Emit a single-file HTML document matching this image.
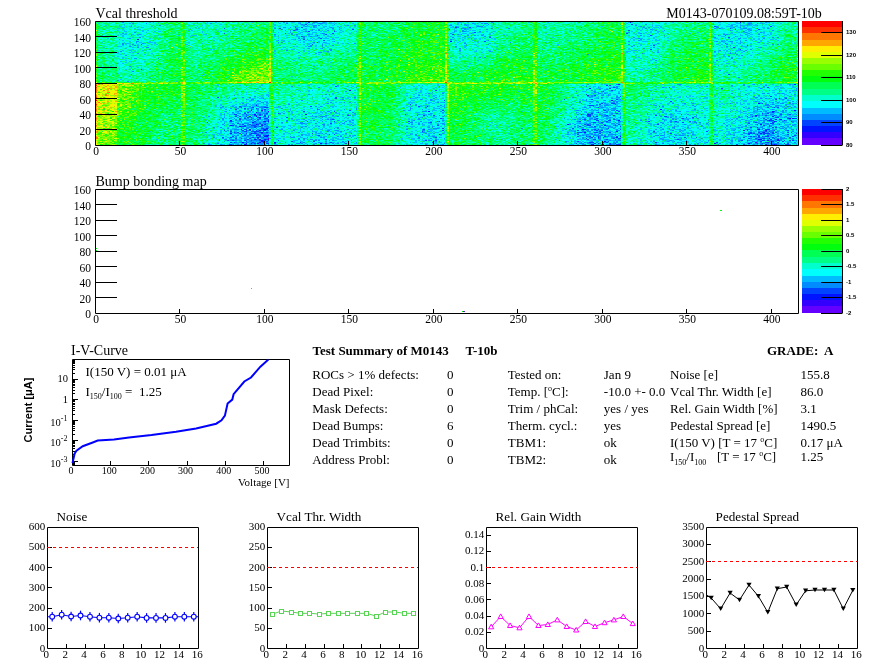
<!DOCTYPE html>
<html><head><meta charset="utf-8"><style>
html,body{margin:0;padding:0;background:#fff;}
#root{position:relative;width:896px;height:672px;overflow:hidden;background:#fff;}
#hm{position:absolute;left:95px;top:21px;width:704px;height:125px;image-rendering:pixelated;}
#ov{position:absolute;left:0;top:0;}
#fb{position:absolute;left:95px;top:21px;}
text{fill:#000;}
</style></head><body><div id="root">
<svg id="fb" width="704" height="125" shape-rendering="crispEdges"><rect x="0.0" y="117.8" width="14.0" height="6.7" fill="#7bfb02"/><rect x="13.5" y="117.8" width="14.0" height="6.7" fill="#50fe12"/><rect x="27.1" y="117.8" width="14.0" height="6.7" fill="#10ff2c"/><rect x="40.6" y="117.8" width="14.0" height="6.7" fill="#07ff51"/><rect x="54.2" y="117.8" width="14.0" height="6.7" fill="#02ff6c"/><rect x="67.7" y="117.8" width="14.0" height="6.7" fill="#02fe68"/><rect x="81.2" y="117.8" width="14.0" height="6.7" fill="#0bfe55"/><rect x="94.8" y="117.8" width="14.0" height="6.7" fill="#01fd81"/><rect x="108.3" y="117.8" width="14.0" height="6.7" fill="#00f6bd"/><rect x="121.8" y="117.8" width="14.0" height="6.7" fill="#00d9e8"/><rect x="135.4" y="117.8" width="14.0" height="6.7" fill="#00a6fa"/><rect x="148.9" y="117.8" width="14.0" height="6.7" fill="#008ffd"/><rect x="162.5" y="117.8" width="14.0" height="6.7" fill="#008cf8"/><rect x="176.0" y="117.8" width="14.0" height="6.7" fill="#01f2be"/><rect x="189.5" y="117.8" width="14.0" height="6.7" fill="#00e8db"/><rect x="203.1" y="117.8" width="14.0" height="6.7" fill="#00e1e4"/><rect x="216.6" y="117.8" width="14.0" height="6.7" fill="#00daea"/><rect x="230.2" y="117.8" width="14.0" height="6.7" fill="#00e1e8"/><rect x="243.7" y="117.8" width="14.0" height="6.7" fill="#00e8dc"/><rect x="257.2" y="117.8" width="14.0" height="6.7" fill="#11f77a"/><rect x="270.8" y="117.8" width="14.0" height="6.7" fill="#06ff4e"/><rect x="284.3" y="117.8" width="14.0" height="6.7" fill="#03fe62"/><rect x="297.8" y="117.8" width="14.0" height="6.7" fill="#00fb9c"/><rect x="311.4" y="117.8" width="14.0" height="6.7" fill="#00e6db"/><rect x="324.9" y="117.8" width="14.0" height="6.7" fill="#00d9e6"/><rect x="338.5" y="117.8" width="14.0" height="6.7" fill="#00dae1"/><rect x="352.0" y="117.8" width="14.0" height="6.7" fill="#11fe3f"/><rect x="365.5" y="117.8" width="14.0" height="6.7" fill="#04fe58"/><rect x="379.1" y="117.8" width="14.0" height="6.7" fill="#01fe6e"/><rect x="392.6" y="117.8" width="14.0" height="6.7" fill="#00fd87"/><rect x="406.2" y="117.8" width="14.0" height="6.7" fill="#00fd88"/><rect x="419.7" y="117.8" width="14.0" height="6.7" fill="#01fe75"/><rect x="433.2" y="117.8" width="14.0" height="6.7" fill="#0efe51"/><rect x="446.8" y="117.8" width="14.0" height="6.7" fill="#01fd82"/><rect x="460.3" y="117.8" width="14.0" height="6.7" fill="#00f2c8"/><rect x="473.8" y="117.8" width="14.0" height="6.7" fill="#00cff1"/><rect x="487.4" y="117.8" width="14.0" height="6.7" fill="#00b0fa"/><rect x="500.9" y="117.8" width="14.0" height="6.7" fill="#00affa"/><rect x="514.5" y="117.8" width="14.0" height="6.7" fill="#00bfed"/><rect x="528.0" y="117.8" width="14.0" height="6.7" fill="#03fc8e"/><rect x="541.5" y="117.8" width="14.0" height="6.7" fill="#00f3c6"/><rect x="555.1" y="117.8" width="14.0" height="6.7" fill="#00e0e6"/><rect x="568.6" y="117.8" width="14.0" height="6.7" fill="#00d4eb"/><rect x="582.2" y="117.8" width="14.0" height="6.7" fill="#00d5ec"/><rect x="595.7" y="117.8" width="14.0" height="6.7" fill="#00e5e0"/><rect x="609.2" y="117.8" width="14.0" height="6.7" fill="#01edbe"/><rect x="622.8" y="117.8" width="14.0" height="6.7" fill="#00e6de"/><rect x="636.3" y="117.8" width="14.0" height="6.7" fill="#00d7ee"/><rect x="649.8" y="117.8" width="14.0" height="6.7" fill="#00b4f7"/><rect x="663.4" y="117.8" width="14.0" height="6.7" fill="#009dfc"/><rect x="676.9" y="117.8" width="14.0" height="6.7" fill="#00acfa"/><rect x="690.5" y="117.8" width="14.0" height="6.7" fill="#00d0e8"/><rect x="0.0" y="111.6" width="14.0" height="6.7" fill="#7df901"/><rect x="13.5" y="111.6" width="14.0" height="6.7" fill="#51fe0f"/><rect x="27.1" y="111.6" width="14.0" height="6.7" fill="#13ff2b"/><rect x="40.6" y="111.6" width="14.0" height="6.7" fill="#07fe4c"/><rect x="54.2" y="111.6" width="14.0" height="6.7" fill="#03fe63"/><rect x="67.7" y="111.6" width="14.0" height="6.7" fill="#02fe66"/><rect x="81.2" y="111.6" width="14.0" height="6.7" fill="#11fe53"/><rect x="94.8" y="111.6" width="14.0" height="6.7" fill="#02fd7b"/><rect x="108.3" y="111.6" width="14.0" height="6.7" fill="#00f6bc"/><rect x="121.8" y="111.6" width="14.0" height="6.7" fill="#00dce9"/><rect x="135.4" y="111.6" width="14.0" height="6.7" fill="#00aef9"/><rect x="148.9" y="111.6" width="14.0" height="6.7" fill="#0092fd"/><rect x="162.5" y="111.6" width="14.0" height="6.7" fill="#008bf9"/><rect x="176.0" y="111.6" width="14.0" height="6.7" fill="#00f2c1"/><rect x="189.5" y="111.6" width="14.0" height="6.7" fill="#00eada"/><rect x="203.1" y="111.6" width="14.0" height="6.7" fill="#00e0e3"/><rect x="216.6" y="111.6" width="14.0" height="6.7" fill="#00dbe8"/><rect x="230.2" y="111.6" width="14.0" height="6.7" fill="#00e2e4"/><rect x="243.7" y="111.6" width="14.0" height="6.7" fill="#00e4e0"/><rect x="257.2" y="111.6" width="14.0" height="6.7" fill="#0ff678"/><rect x="270.8" y="111.6" width="14.0" height="6.7" fill="#05ff49"/><rect x="284.3" y="111.6" width="14.0" height="6.7" fill="#04fe5e"/><rect x="297.8" y="111.6" width="14.0" height="6.7" fill="#00fc9a"/><rect x="311.4" y="111.6" width="14.0" height="6.7" fill="#00e9dd"/><rect x="324.9" y="111.6" width="14.0" height="6.7" fill="#00dde7"/><rect x="338.5" y="111.6" width="14.0" height="6.7" fill="#00d8df"/><rect x="352.0" y="111.6" width="14.0" height="6.7" fill="#11ff3b"/><rect x="365.5" y="111.6" width="14.0" height="6.7" fill="#04fe53"/><rect x="379.1" y="111.6" width="14.0" height="6.7" fill="#02ff70"/><rect x="392.6" y="111.6" width="14.0" height="6.7" fill="#01fd88"/><rect x="406.2" y="111.6" width="14.0" height="6.7" fill="#00fd8c"/><rect x="419.7" y="111.6" width="14.0" height="6.7" fill="#02fe6f"/><rect x="433.2" y="111.6" width="14.0" height="6.7" fill="#13fe51"/><rect x="446.8" y="111.6" width="14.0" height="6.7" fill="#02fd7f"/><rect x="460.3" y="111.6" width="14.0" height="6.7" fill="#00f1c4"/><rect x="473.8" y="111.6" width="14.0" height="6.7" fill="#00cfeb"/><rect x="487.4" y="111.6" width="14.0" height="6.7" fill="#00b1f9"/><rect x="500.9" y="111.6" width="14.0" height="6.7" fill="#00adf9"/><rect x="514.5" y="111.6" width="14.0" height="6.7" fill="#00c0ee"/><rect x="528.0" y="111.6" width="14.0" height="6.7" fill="#03fc8f"/><rect x="541.5" y="111.6" width="14.0" height="6.7" fill="#00f6c1"/><rect x="555.1" y="111.6" width="14.0" height="6.7" fill="#00e2e7"/><rect x="568.6" y="111.6" width="14.0" height="6.7" fill="#00d3ea"/><rect x="582.2" y="111.6" width="14.0" height="6.7" fill="#00d6ea"/><rect x="595.7" y="111.6" width="14.0" height="6.7" fill="#00e5dd"/><rect x="609.2" y="111.6" width="14.0" height="6.7" fill="#00efba"/><rect x="622.8" y="111.6" width="14.0" height="6.7" fill="#00eadb"/><rect x="636.3" y="111.6" width="14.0" height="6.7" fill="#00d5ed"/><rect x="649.8" y="111.6" width="14.0" height="6.7" fill="#00bbf7"/><rect x="663.4" y="111.6" width="14.0" height="6.7" fill="#0098fd"/><rect x="676.9" y="111.6" width="14.0" height="6.7" fill="#00aef7"/><rect x="690.5" y="111.6" width="14.0" height="6.7" fill="#00cde8"/><rect x="0.0" y="105.4" width="14.0" height="6.7" fill="#8ff701"/><rect x="13.5" y="105.4" width="14.0" height="6.7" fill="#5dfe0c"/><rect x="27.1" y="105.4" width="14.0" height="6.7" fill="#1bff21"/><rect x="40.6" y="105.4" width="14.0" height="6.7" fill="#07fe45"/><rect x="54.2" y="105.4" width="14.0" height="6.7" fill="#02fe6a"/><rect x="67.7" y="105.4" width="14.0" height="6.7" fill="#03fe62"/><rect x="81.2" y="105.4" width="14.0" height="6.7" fill="#0dfe50"/><rect x="94.8" y="105.4" width="14.0" height="6.7" fill="#01fe7a"/><rect x="108.3" y="105.4" width="14.0" height="6.7" fill="#00f7b8"/><rect x="121.8" y="105.4" width="14.0" height="6.7" fill="#00dee5"/><rect x="135.4" y="105.4" width="14.0" height="6.7" fill="#00b2f8"/><rect x="148.9" y="105.4" width="14.0" height="6.7" fill="#0096fc"/><rect x="162.5" y="105.4" width="14.0" height="6.7" fill="#0193f8"/><rect x="176.0" y="105.4" width="14.0" height="6.7" fill="#00eebf"/><rect x="189.5" y="105.4" width="14.0" height="6.7" fill="#00eadc"/><rect x="203.1" y="105.4" width="14.0" height="6.7" fill="#00dfe2"/><rect x="216.6" y="105.4" width="14.0" height="6.7" fill="#00dde6"/><rect x="230.2" y="105.4" width="14.0" height="6.7" fill="#00dee8"/><rect x="243.7" y="105.4" width="14.0" height="6.7" fill="#00e9db"/><rect x="257.2" y="105.4" width="14.0" height="6.7" fill="#0ff679"/><rect x="270.8" y="105.4" width="14.0" height="6.7" fill="#07ff46"/><rect x="284.3" y="105.4" width="14.0" height="6.7" fill="#04fe5e"/><rect x="297.8" y="105.4" width="14.0" height="6.7" fill="#00fb91"/><rect x="311.4" y="105.4" width="14.0" height="6.7" fill="#00e8d7"/><rect x="324.9" y="105.4" width="14.0" height="6.7" fill="#00dfe9"/><rect x="338.5" y="105.4" width="14.0" height="6.7" fill="#00dddb"/><rect x="352.0" y="105.4" width="14.0" height="6.7" fill="#17fe37"/><rect x="365.5" y="105.4" width="14.0" height="6.7" fill="#05fe52"/><rect x="379.1" y="105.4" width="14.0" height="6.7" fill="#01fe76"/><rect x="392.6" y="105.4" width="14.0" height="6.7" fill="#00fd91"/><rect x="406.2" y="105.4" width="14.0" height="6.7" fill="#00fd8b"/><rect x="419.7" y="105.4" width="14.0" height="6.7" fill="#01fe76"/><rect x="433.2" y="105.4" width="14.0" height="6.7" fill="#0ffe57"/><rect x="446.8" y="105.4" width="14.0" height="6.7" fill="#01fd74"/><rect x="460.3" y="105.4" width="14.0" height="6.7" fill="#00f3c5"/><rect x="473.8" y="105.4" width="14.0" height="6.7" fill="#00d6ed"/><rect x="487.4" y="105.4" width="14.0" height="6.7" fill="#00b1f9"/><rect x="500.9" y="105.4" width="14.0" height="6.7" fill="#00adfb"/><rect x="514.5" y="105.4" width="14.0" height="6.7" fill="#00beee"/><rect x="528.0" y="105.4" width="14.0" height="6.7" fill="#03fd8a"/><rect x="541.5" y="105.4" width="14.0" height="6.7" fill="#00f6bf"/><rect x="555.1" y="105.4" width="14.0" height="6.7" fill="#00e3e4"/><rect x="568.6" y="105.4" width="14.0" height="6.7" fill="#00d6ed"/><rect x="582.2" y="105.4" width="14.0" height="6.7" fill="#00dbec"/><rect x="595.7" y="105.4" width="14.0" height="6.7" fill="#00e5e1"/><rect x="609.2" y="105.4" width="14.0" height="6.7" fill="#00f1b6"/><rect x="622.8" y="105.4" width="14.0" height="6.7" fill="#00ead8"/><rect x="636.3" y="105.4" width="14.0" height="6.7" fill="#00dbea"/><rect x="649.8" y="105.4" width="14.0" height="6.7" fill="#00bcf5"/><rect x="663.4" y="105.4" width="14.0" height="6.7" fill="#00a1fb"/><rect x="676.9" y="105.4" width="14.0" height="6.7" fill="#00b5f7"/><rect x="690.5" y="105.4" width="14.0" height="6.7" fill="#00d1e7"/><rect x="0.0" y="99.2" width="14.0" height="6.7" fill="#a3f300"/><rect x="13.5" y="99.2" width="14.0" height="6.7" fill="#67fd07"/><rect x="27.1" y="99.2" width="14.0" height="6.7" fill="#24fe16"/><rect x="40.6" y="99.2" width="14.0" height="6.7" fill="#0bff40"/><rect x="54.2" y="99.2" width="14.0" height="6.7" fill="#04ff5f"/><rect x="67.7" y="99.2" width="14.0" height="6.7" fill="#02fe68"/><rect x="81.2" y="99.2" width="14.0" height="6.7" fill="#0efe52"/><rect x="94.8" y="99.2" width="14.0" height="6.7" fill="#01fd7c"/><rect x="108.3" y="99.2" width="14.0" height="6.7" fill="#00f8b6"/><rect x="121.8" y="99.2" width="14.0" height="6.7" fill="#00e5e1"/><rect x="135.4" y="99.2" width="14.0" height="6.7" fill="#00b7f8"/><rect x="148.9" y="99.2" width="14.0" height="6.7" fill="#009bfb"/><rect x="162.5" y="99.2" width="14.0" height="6.7" fill="#009cf4"/><rect x="176.0" y="99.2" width="14.0" height="6.7" fill="#00f1c0"/><rect x="189.5" y="99.2" width="14.0" height="6.7" fill="#00eed8"/><rect x="203.1" y="99.2" width="14.0" height="6.7" fill="#00e3e0"/><rect x="216.6" y="99.2" width="14.0" height="6.7" fill="#00dce7"/><rect x="230.2" y="99.2" width="14.0" height="6.7" fill="#00e0e5"/><rect x="243.7" y="99.2" width="14.0" height="6.7" fill="#00e5dd"/><rect x="257.2" y="99.2" width="14.0" height="6.7" fill="#10f77a"/><rect x="270.8" y="99.2" width="14.0" height="6.7" fill="#07ff4a"/><rect x="284.3" y="99.2" width="14.0" height="6.7" fill="#04ff54"/><rect x="297.8" y="99.2" width="14.0" height="6.7" fill="#01fd92"/><rect x="311.4" y="99.2" width="14.0" height="6.7" fill="#00ebda"/><rect x="324.9" y="99.2" width="14.0" height="6.7" fill="#00e2e6"/><rect x="338.5" y="99.2" width="14.0" height="6.7" fill="#00ddde"/><rect x="352.0" y="99.2" width="14.0" height="6.7" fill="#19fe2e"/><rect x="365.5" y="99.2" width="14.0" height="6.7" fill="#05fe57"/><rect x="379.1" y="99.2" width="14.0" height="6.7" fill="#01fe7c"/><rect x="392.6" y="99.2" width="14.0" height="6.7" fill="#00fc9c"/><rect x="406.2" y="99.2" width="14.0" height="6.7" fill="#00fc94"/><rect x="419.7" y="99.2" width="14.0" height="6.7" fill="#01fe71"/><rect x="433.2" y="99.2" width="14.0" height="6.7" fill="#14fe4d"/><rect x="446.8" y="99.2" width="14.0" height="6.7" fill="#01fd6e"/><rect x="460.3" y="99.2" width="14.0" height="6.7" fill="#00f4bd"/><rect x="473.8" y="99.2" width="14.0" height="6.7" fill="#00dde9"/><rect x="487.4" y="99.2" width="14.0" height="6.7" fill="#00b9f7"/><rect x="500.9" y="99.2" width="14.0" height="6.7" fill="#00b7f8"/><rect x="514.5" y="99.2" width="14.0" height="6.7" fill="#00bfed"/><rect x="528.0" y="99.2" width="14.0" height="6.7" fill="#02fb90"/><rect x="541.5" y="99.2" width="14.0" height="6.7" fill="#00f8ba"/><rect x="555.1" y="99.2" width="14.0" height="6.7" fill="#00e5dc"/><rect x="568.6" y="99.2" width="14.0" height="6.7" fill="#00d8ec"/><rect x="582.2" y="99.2" width="14.0" height="6.7" fill="#00d5eb"/><rect x="595.7" y="99.2" width="14.0" height="6.7" fill="#00e3e0"/><rect x="609.2" y="99.2" width="14.0" height="6.7" fill="#01f0b6"/><rect x="622.8" y="99.2" width="14.0" height="6.7" fill="#00f0cf"/><rect x="636.3" y="99.2" width="14.0" height="6.7" fill="#00dde4"/><rect x="649.8" y="99.2" width="14.0" height="6.7" fill="#00c3f4"/><rect x="663.4" y="99.2" width="14.0" height="6.7" fill="#00acfa"/><rect x="676.9" y="99.2" width="14.0" height="6.7" fill="#00b9f7"/><rect x="690.5" y="99.2" width="14.0" height="6.7" fill="#00cfe6"/><rect x="0.0" y="93.0" width="14.0" height="6.7" fill="#b1f200"/><rect x="13.5" y="93.0" width="14.0" height="6.7" fill="#7bfc04"/><rect x="27.1" y="93.0" width="14.0" height="6.7" fill="#2ffe11"/><rect x="40.6" y="93.0" width="14.0" height="6.7" fill="#10ff32"/><rect x="54.2" y="93.0" width="14.0" height="6.7" fill="#05ff52"/><rect x="67.7" y="93.0" width="14.0" height="6.7" fill="#02fe5f"/><rect x="81.2" y="93.0" width="14.0" height="6.7" fill="#12fe4c"/><rect x="94.8" y="93.0" width="14.0" height="6.7" fill="#02fe71"/><rect x="108.3" y="93.0" width="14.0" height="6.7" fill="#00fbac"/><rect x="121.8" y="93.0" width="14.0" height="6.7" fill="#00ebd5"/><rect x="135.4" y="93.0" width="14.0" height="6.7" fill="#00c3f3"/><rect x="148.9" y="93.0" width="14.0" height="6.7" fill="#00affa"/><rect x="162.5" y="93.0" width="14.0" height="6.7" fill="#00a7f5"/><rect x="176.0" y="93.0" width="14.0" height="6.7" fill="#01f3ba"/><rect x="189.5" y="93.0" width="14.0" height="6.7" fill="#00eed4"/><rect x="203.1" y="93.0" width="14.0" height="6.7" fill="#00ebda"/><rect x="216.6" y="93.0" width="14.0" height="6.7" fill="#00e2e3"/><rect x="230.2" y="93.0" width="14.0" height="6.7" fill="#00e2e4"/><rect x="243.7" y="93.0" width="14.0" height="6.7" fill="#00e8d8"/><rect x="257.2" y="93.0" width="14.0" height="6.7" fill="#0ef776"/><rect x="270.8" y="93.0" width="14.0" height="6.7" fill="#09ff46"/><rect x="284.3" y="93.0" width="14.0" height="6.7" fill="#06fe52"/><rect x="297.8" y="93.0" width="14.0" height="6.7" fill="#01fd8d"/><rect x="311.4" y="93.0" width="14.0" height="6.7" fill="#00ebd8"/><rect x="324.9" y="93.0" width="14.0" height="6.7" fill="#00dce9"/><rect x="338.5" y="93.0" width="14.0" height="6.7" fill="#00e2d9"/><rect x="352.0" y="93.0" width="14.0" height="6.7" fill="#1dfe2b"/><rect x="365.5" y="93.0" width="14.0" height="6.7" fill="#05fe4c"/><rect x="379.1" y="93.0" width="14.0" height="6.7" fill="#01fe75"/><rect x="392.6" y="93.0" width="14.0" height="6.7" fill="#00fe86"/><rect x="406.2" y="93.0" width="14.0" height="6.7" fill="#01fd86"/><rect x="419.7" y="93.0" width="14.0" height="6.7" fill="#02fe6b"/><rect x="433.2" y="93.0" width="14.0" height="6.7" fill="#14fe45"/><rect x="446.8" y="93.0" width="14.0" height="6.7" fill="#03fe6a"/><rect x="460.3" y="93.0" width="14.0" height="6.7" fill="#00f8ad"/><rect x="473.8" y="93.0" width="14.0" height="6.7" fill="#00e2e2"/><rect x="487.4" y="93.0" width="14.0" height="6.7" fill="#00c8f4"/><rect x="500.9" y="93.0" width="14.0" height="6.7" fill="#00b7f7"/><rect x="514.5" y="93.0" width="14.0" height="6.7" fill="#00c0ed"/><rect x="528.0" y="93.0" width="14.0" height="6.7" fill="#03fc8d"/><rect x="541.5" y="93.0" width="14.0" height="6.7" fill="#00f8b5"/><rect x="555.1" y="93.0" width="14.0" height="6.7" fill="#00eed6"/><rect x="568.6" y="93.0" width="14.0" height="6.7" fill="#00e0e4"/><rect x="582.2" y="93.0" width="14.0" height="6.7" fill="#00dce8"/><rect x="595.7" y="93.0" width="14.0" height="6.7" fill="#00e6db"/><rect x="609.2" y="93.0" width="14.0" height="6.7" fill="#01f3af"/><rect x="622.8" y="93.0" width="14.0" height="6.7" fill="#00f1cb"/><rect x="636.3" y="93.0" width="14.0" height="6.7" fill="#00dee5"/><rect x="649.8" y="93.0" width="14.0" height="6.7" fill="#00cbf1"/><rect x="663.4" y="93.0" width="14.0" height="6.7" fill="#00b5f9"/><rect x="676.9" y="93.0" width="14.0" height="6.7" fill="#00bbf5"/><rect x="690.5" y="93.0" width="14.0" height="6.7" fill="#00d5e2"/><rect x="0.0" y="86.8" width="14.0" height="6.7" fill="#b7ef00"/><rect x="13.5" y="86.8" width="14.0" height="6.7" fill="#8bfb03"/><rect x="27.1" y="86.8" width="14.0" height="6.7" fill="#3cfe0b"/><rect x="40.6" y="86.8" width="14.0" height="6.7" fill="#12fe2c"/><rect x="54.2" y="86.8" width="14.0" height="6.7" fill="#05fe50"/><rect x="67.7" y="86.8" width="14.0" height="6.7" fill="#03fe5c"/><rect x="81.2" y="86.8" width="14.0" height="6.7" fill="#16fe47"/><rect x="94.8" y="86.8" width="14.0" height="6.7" fill="#02fe69"/><rect x="108.3" y="86.8" width="14.0" height="6.7" fill="#00fda1"/><rect x="121.8" y="86.8" width="14.0" height="6.7" fill="#00f2cc"/><rect x="135.4" y="86.8" width="14.0" height="6.7" fill="#00d2ec"/><rect x="148.9" y="86.8" width="14.0" height="6.7" fill="#00bcf6"/><rect x="162.5" y="86.8" width="14.0" height="6.7" fill="#00b3f0"/><rect x="176.0" y="86.8" width="14.0" height="6.7" fill="#01f7b3"/><rect x="189.5" y="86.8" width="14.0" height="6.7" fill="#00f1ce"/><rect x="203.1" y="86.8" width="14.0" height="6.7" fill="#00eed4"/><rect x="216.6" y="86.8" width="14.0" height="6.7" fill="#00e7e0"/><rect x="230.2" y="86.8" width="14.0" height="6.7" fill="#00eada"/><rect x="243.7" y="86.8" width="14.0" height="6.7" fill="#00ead8"/><rect x="257.2" y="86.8" width="14.0" height="6.7" fill="#10f871"/><rect x="270.8" y="86.8" width="14.0" height="6.7" fill="#09ff3c"/><rect x="284.3" y="86.8" width="14.0" height="6.7" fill="#06ff4d"/><rect x="297.8" y="86.8" width="14.0" height="6.7" fill="#01fc8b"/><rect x="311.4" y="86.8" width="14.0" height="6.7" fill="#00ebd9"/><rect x="324.9" y="86.8" width="14.0" height="6.7" fill="#00dee5"/><rect x="338.5" y="86.8" width="14.0" height="6.7" fill="#00e3d7"/><rect x="352.0" y="86.8" width="14.0" height="6.7" fill="#1efe24"/><rect x="365.5" y="86.8" width="14.0" height="6.7" fill="#09ff3e"/><rect x="379.1" y="86.8" width="14.0" height="6.7" fill="#03fe61"/><rect x="392.6" y="86.8" width="14.0" height="6.7" fill="#01fd77"/><rect x="406.2" y="86.8" width="14.0" height="6.7" fill="#01fe72"/><rect x="419.7" y="86.8" width="14.0" height="6.7" fill="#02fe5f"/><rect x="433.2" y="86.8" width="14.0" height="6.7" fill="#19ff3b"/><rect x="446.8" y="86.8" width="14.0" height="6.7" fill="#04ff60"/><rect x="460.3" y="86.8" width="14.0" height="6.7" fill="#00faa5"/><rect x="473.8" y="86.8" width="14.0" height="6.7" fill="#00e9d8"/><rect x="487.4" y="86.8" width="14.0" height="6.7" fill="#00cbf1"/><rect x="500.9" y="86.8" width="14.0" height="6.7" fill="#00bef7"/><rect x="514.5" y="86.8" width="14.0" height="6.7" fill="#00caeb"/><rect x="528.0" y="86.8" width="14.0" height="6.7" fill="#03fd7c"/><rect x="541.5" y="86.8" width="14.0" height="6.7" fill="#00faae"/><rect x="555.1" y="86.8" width="14.0" height="6.7" fill="#00f1cc"/><rect x="568.6" y="86.8" width="14.0" height="6.7" fill="#00e9db"/><rect x="582.2" y="86.8" width="14.0" height="6.7" fill="#00e6e1"/><rect x="595.7" y="86.8" width="14.0" height="6.7" fill="#00eed8"/><rect x="609.2" y="86.8" width="14.0" height="6.7" fill="#02f5a4"/><rect x="622.8" y="86.8" width="14.0" height="6.7" fill="#00f3c7"/><rect x="636.3" y="86.8" width="14.0" height="6.7" fill="#00e8df"/><rect x="649.8" y="86.8" width="14.0" height="6.7" fill="#00d7eb"/><rect x="663.4" y="86.8" width="14.0" height="6.7" fill="#00c0f5"/><rect x="676.9" y="86.8" width="14.0" height="6.7" fill="#00cbf0"/><rect x="690.5" y="86.8" width="14.0" height="6.7" fill="#00d6e2"/><rect x="0.0" y="80.6" width="14.0" height="6.7" fill="#c9e900"/><rect x="13.5" y="80.6" width="14.0" height="6.7" fill="#93f702"/><rect x="27.1" y="80.6" width="14.0" height="6.7" fill="#40fe0b"/><rect x="40.6" y="80.6" width="14.0" height="6.7" fill="#19ff22"/><rect x="54.2" y="80.6" width="14.0" height="6.7" fill="#07fe48"/><rect x="67.7" y="80.6" width="14.0" height="6.7" fill="#05fe54"/><rect x="81.2" y="80.6" width="14.0" height="6.7" fill="#13fe3f"/><rect x="94.8" y="80.6" width="14.0" height="6.7" fill="#03fe60"/><rect x="108.3" y="80.6" width="14.0" height="6.7" fill="#00fc91"/><rect x="121.8" y="80.6" width="14.0" height="6.7" fill="#00f4c0"/><rect x="135.4" y="80.6" width="14.0" height="6.7" fill="#00dfe3"/><rect x="148.9" y="80.6" width="14.0" height="6.7" fill="#00cbf1"/><rect x="162.5" y="80.6" width="14.0" height="6.7" fill="#00c7e9"/><rect x="176.0" y="80.6" width="14.0" height="6.7" fill="#01f7ab"/><rect x="189.5" y="80.6" width="14.0" height="6.7" fill="#00f4c5"/><rect x="203.1" y="80.6" width="14.0" height="6.7" fill="#00f1cf"/><rect x="216.6" y="80.6" width="14.0" height="6.7" fill="#00ecd8"/><rect x="230.2" y="80.6" width="14.0" height="6.7" fill="#00e9d8"/><rect x="243.7" y="80.6" width="14.0" height="6.7" fill="#00eed3"/><rect x="257.2" y="80.6" width="14.0" height="6.7" fill="#13f96b"/><rect x="270.8" y="80.6" width="14.0" height="6.7" fill="#0aff3a"/><rect x="284.3" y="80.6" width="14.0" height="6.7" fill="#06fe4c"/><rect x="297.8" y="80.6" width="14.0" height="6.7" fill="#01fc8c"/><rect x="311.4" y="80.6" width="14.0" height="6.7" fill="#00eddb"/><rect x="324.9" y="80.6" width="14.0" height="6.7" fill="#00e5e0"/><rect x="338.5" y="80.6" width="14.0" height="6.7" fill="#00e9d3"/><rect x="352.0" y="80.6" width="14.0" height="6.7" fill="#24fe23"/><rect x="365.5" y="80.6" width="14.0" height="6.7" fill="#0cfe38"/><rect x="379.1" y="80.6" width="14.0" height="6.7" fill="#05fe4e"/><rect x="392.6" y="80.6" width="14.0" height="6.7" fill="#04fe5e"/><rect x="406.2" y="80.6" width="14.0" height="6.7" fill="#02fe5e"/><rect x="419.7" y="80.6" width="14.0" height="6.7" fill="#04ff54"/><rect x="433.2" y="80.6" width="14.0" height="6.7" fill="#19fe3a"/><rect x="446.8" y="80.6" width="14.0" height="6.7" fill="#08fe4d"/><rect x="460.3" y="80.6" width="14.0" height="6.7" fill="#00fc97"/><rect x="473.8" y="80.6" width="14.0" height="6.7" fill="#00edce"/><rect x="487.4" y="80.6" width="14.0" height="6.7" fill="#00ceef"/><rect x="500.9" y="80.6" width="14.0" height="6.7" fill="#00cef1"/><rect x="514.5" y="80.6" width="14.0" height="6.7" fill="#00cee7"/><rect x="528.0" y="80.6" width="14.0" height="6.7" fill="#06fe78"/><rect x="541.5" y="80.6" width="14.0" height="6.7" fill="#00fba4"/><rect x="555.1" y="80.6" width="14.0" height="6.7" fill="#00f4bd"/><rect x="568.6" y="80.6" width="14.0" height="6.7" fill="#00efd1"/><rect x="582.2" y="80.6" width="14.0" height="6.7" fill="#00e8dc"/><rect x="595.7" y="80.6" width="14.0" height="6.7" fill="#00ecd2"/><rect x="609.2" y="80.6" width="14.0" height="6.7" fill="#02f8a2"/><rect x="622.8" y="80.6" width="14.0" height="6.7" fill="#00f6c0"/><rect x="636.3" y="80.6" width="14.0" height="6.7" fill="#00ead7"/><rect x="649.8" y="80.6" width="14.0" height="6.7" fill="#00dfe7"/><rect x="663.4" y="80.6" width="14.0" height="6.7" fill="#00d0f0"/><rect x="676.9" y="80.6" width="14.0" height="6.7" fill="#00d4ee"/><rect x="690.5" y="80.6" width="14.0" height="6.7" fill="#00e0df"/><rect x="0.0" y="74.4" width="14.0" height="6.7" fill="#d0e500"/><rect x="13.5" y="74.4" width="14.0" height="6.7" fill="#a1f600"/><rect x="27.1" y="74.4" width="14.0" height="6.7" fill="#51fe05"/><rect x="40.6" y="74.4" width="14.0" height="6.7" fill="#24fe19"/><rect x="54.2" y="74.4" width="14.0" height="6.7" fill="#0cfe35"/><rect x="67.7" y="74.4" width="14.0" height="6.7" fill="#08fe45"/><rect x="81.2" y="74.4" width="14.0" height="6.7" fill="#19fe3c"/><rect x="94.8" y="74.4" width="14.0" height="6.7" fill="#04fe58"/><rect x="108.3" y="74.4" width="14.0" height="6.7" fill="#01fe83"/><rect x="121.8" y="74.4" width="14.0" height="6.7" fill="#00fba7"/><rect x="135.4" y="74.4" width="14.0" height="6.7" fill="#00f0c8"/><rect x="148.9" y="74.4" width="14.0" height="6.7" fill="#00e7d8"/><rect x="162.5" y="74.4" width="14.0" height="6.7" fill="#00e8d3"/><rect x="176.0" y="74.4" width="14.0" height="6.7" fill="#02f9a0"/><rect x="189.5" y="74.4" width="14.0" height="6.7" fill="#00f7b6"/><rect x="203.1" y="74.4" width="14.0" height="6.7" fill="#00f3c3"/><rect x="216.6" y="74.4" width="14.0" height="6.7" fill="#00f4ca"/><rect x="230.2" y="74.4" width="14.0" height="6.7" fill="#00f0cd"/><rect x="243.7" y="74.4" width="14.0" height="6.7" fill="#00f4c9"/><rect x="257.2" y="74.4" width="14.0" height="6.7" fill="#15f868"/><rect x="270.8" y="74.4" width="14.0" height="6.7" fill="#0dff36"/><rect x="284.3" y="74.4" width="14.0" height="6.7" fill="#07fe4a"/><rect x="297.8" y="74.4" width="14.0" height="6.7" fill="#01fd81"/><rect x="311.4" y="74.4" width="14.0" height="6.7" fill="#00f0cf"/><rect x="324.9" y="74.4" width="14.0" height="6.7" fill="#00ecd9"/><rect x="338.5" y="74.4" width="14.0" height="6.7" fill="#00ebd0"/><rect x="352.0" y="74.4" width="14.0" height="6.7" fill="#2cfe18"/><rect x="365.5" y="74.4" width="14.0" height="6.7" fill="#14ff26"/><rect x="379.1" y="74.4" width="14.0" height="6.7" fill="#0dff33"/><rect x="392.6" y="74.4" width="14.0" height="6.7" fill="#09ff40"/><rect x="406.2" y="74.4" width="14.0" height="6.7" fill="#08fe3f"/><rect x="419.7" y="74.4" width="14.0" height="6.7" fill="#05ff4a"/><rect x="433.2" y="74.4" width="14.0" height="6.7" fill="#1ffe30"/><rect x="446.8" y="74.4" width="14.0" height="6.7" fill="#06ff49"/><rect x="460.3" y="74.4" width="14.0" height="6.7" fill="#01fd89"/><rect x="473.8" y="74.4" width="14.0" height="6.7" fill="#00f3c1"/><rect x="487.4" y="74.4" width="14.0" height="6.7" fill="#00dce5"/><rect x="500.9" y="74.4" width="14.0" height="6.7" fill="#00d2ee"/><rect x="514.5" y="74.4" width="14.0" height="6.7" fill="#00d5e3"/><rect x="528.0" y="74.4" width="14.0" height="6.7" fill="#06fe65"/><rect x="541.5" y="74.4" width="14.0" height="6.7" fill="#00fc8f"/><rect x="555.1" y="74.4" width="14.0" height="6.7" fill="#00f9b3"/><rect x="568.6" y="74.4" width="14.0" height="6.7" fill="#00f2c8"/><rect x="582.2" y="74.4" width="14.0" height="6.7" fill="#00ecd3"/><rect x="595.7" y="74.4" width="14.0" height="6.7" fill="#00f1c9"/><rect x="609.2" y="74.4" width="14.0" height="6.7" fill="#02fa9c"/><rect x="622.8" y="74.4" width="14.0" height="6.7" fill="#00f8ba"/><rect x="636.3" y="74.4" width="14.0" height="6.7" fill="#00eed1"/><rect x="649.8" y="74.4" width="14.0" height="6.7" fill="#00e9d9"/><rect x="663.4" y="74.4" width="14.0" height="6.7" fill="#00dde5"/><rect x="676.9" y="74.4" width="14.0" height="6.7" fill="#00dbe9"/><rect x="690.5" y="74.4" width="14.0" height="6.7" fill="#00e0dd"/><rect x="0.0" y="68.2" width="14.0" height="6.7" fill="#dbde00"/><rect x="13.5" y="68.2" width="14.0" height="6.7" fill="#abf301"/><rect x="27.1" y="68.2" width="14.0" height="6.7" fill="#60fe03"/><rect x="40.6" y="68.2" width="14.0" height="6.7" fill="#26ff14"/><rect x="54.2" y="68.2" width="14.0" height="6.7" fill="#0eff2f"/><rect x="67.7" y="68.2" width="14.0" height="6.7" fill="#0cff34"/><rect x="81.2" y="68.2" width="14.0" height="6.7" fill="#1ffe30"/><rect x="94.8" y="68.2" width="14.0" height="6.7" fill="#06fe4e"/><rect x="108.3" y="68.2" width="14.0" height="6.7" fill="#02fe71"/><rect x="121.8" y="68.2" width="14.0" height="6.7" fill="#00fc94"/><rect x="135.4" y="68.2" width="14.0" height="6.7" fill="#00faae"/><rect x="148.9" y="68.2" width="14.0" height="6.7" fill="#00f7bf"/><rect x="162.5" y="68.2" width="14.0" height="6.7" fill="#01f8b1"/><rect x="176.0" y="68.2" width="14.0" height="6.7" fill="#03fb96"/><rect x="189.5" y="68.2" width="14.0" height="6.7" fill="#00fba6"/><rect x="203.1" y="68.2" width="14.0" height="6.7" fill="#00f8b7"/><rect x="216.6" y="68.2" width="14.0" height="6.7" fill="#00f7ba"/><rect x="230.2" y="68.2" width="14.0" height="6.7" fill="#00f1c7"/><rect x="243.7" y="68.2" width="14.0" height="6.7" fill="#00f7c0"/><rect x="257.2" y="68.2" width="14.0" height="6.7" fill="#13fb6a"/><rect x="270.8" y="68.2" width="14.0" height="6.7" fill="#0dff32"/><rect x="284.3" y="68.2" width="14.0" height="6.7" fill="#07fe43"/><rect x="297.8" y="68.2" width="14.0" height="6.7" fill="#01fd79"/><rect x="311.4" y="68.2" width="14.0" height="6.7" fill="#00f3c3"/><rect x="324.9" y="68.2" width="14.0" height="6.7" fill="#00efd2"/><rect x="338.5" y="68.2" width="14.0" height="6.7" fill="#00edcb"/><rect x="352.0" y="68.2" width="14.0" height="6.7" fill="#37fe11"/><rect x="365.5" y="68.2" width="14.0" height="6.7" fill="#22ff17"/><rect x="379.1" y="68.2" width="14.0" height="6.7" fill="#1bfe1f"/><rect x="392.6" y="68.2" width="14.0" height="6.7" fill="#14ff27"/><rect x="406.2" y="68.2" width="14.0" height="6.7" fill="#0fff31"/><rect x="419.7" y="68.2" width="14.0" height="6.7" fill="#0dff2f"/><rect x="433.2" y="68.2" width="14.0" height="6.7" fill="#24fe2a"/><rect x="446.8" y="68.2" width="14.0" height="6.7" fill="#08fe44"/><rect x="460.3" y="68.2" width="14.0" height="6.7" fill="#01fe78"/><rect x="473.8" y="68.2" width="14.0" height="6.7" fill="#00f9b5"/><rect x="487.4" y="68.2" width="14.0" height="6.7" fill="#00e6df"/><rect x="500.9" y="68.2" width="14.0" height="6.7" fill="#00dae8"/><rect x="514.5" y="68.2" width="14.0" height="6.7" fill="#00d9df"/><rect x="528.0" y="68.2" width="14.0" height="6.7" fill="#09fe5a"/><rect x="541.5" y="68.2" width="14.0" height="6.7" fill="#01fe81"/><rect x="555.1" y="68.2" width="14.0" height="6.7" fill="#00fc9e"/><rect x="568.6" y="68.2" width="14.0" height="6.7" fill="#00f5c3"/><rect x="582.2" y="68.2" width="14.0" height="6.7" fill="#00eecd"/><rect x="595.7" y="68.2" width="14.0" height="6.7" fill="#00f4c7"/><rect x="609.2" y="68.2" width="14.0" height="6.7" fill="#03fa94"/><rect x="622.8" y="68.2" width="14.0" height="6.7" fill="#00f9ad"/><rect x="636.3" y="68.2" width="14.0" height="6.7" fill="#00f4c4"/><rect x="649.8" y="68.2" width="14.0" height="6.7" fill="#00efd3"/><rect x="663.4" y="68.2" width="14.0" height="6.7" fill="#00e4dd"/><rect x="676.9" y="68.2" width="14.0" height="6.7" fill="#00e4e3"/><rect x="690.5" y="68.2" width="14.0" height="6.7" fill="#00e3d6"/><rect x="0.0" y="62.0" width="14.0" height="6.7" fill="#e2cc00"/><rect x="13.5" y="62.0" width="14.0" height="6.7" fill="#bbe800"/><rect x="27.1" y="62.0" width="14.0" height="6.7" fill="#78fb02"/><rect x="40.6" y="62.0" width="14.0" height="6.7" fill="#3cfe0e"/><rect x="54.2" y="62.0" width="14.0" height="6.7" fill="#1ffe25"/><rect x="67.7" y="62.0" width="14.0" height="6.7" fill="#1cfe2b"/><rect x="81.2" y="62.0" width="14.0" height="6.7" fill="#2cfd2c"/><rect x="94.8" y="62.0" width="14.0" height="6.7" fill="#10fe44"/><rect x="108.3" y="62.0" width="14.0" height="6.7" fill="#09fe62"/><rect x="121.8" y="62.0" width="14.0" height="6.7" fill="#04fd7e"/><rect x="135.4" y="62.0" width="14.0" height="6.7" fill="#02fc93"/><rect x="148.9" y="62.0" width="14.0" height="6.7" fill="#03fa9d"/><rect x="162.5" y="62.0" width="14.0" height="6.7" fill="#03fa96"/><rect x="176.0" y="62.0" width="14.0" height="6.7" fill="#07fc83"/><rect x="189.5" y="62.0" width="14.0" height="6.7" fill="#03fb93"/><rect x="203.1" y="62.0" width="14.0" height="6.7" fill="#01f9a3"/><rect x="216.6" y="62.0" width="14.0" height="6.7" fill="#02f8a9"/><rect x="230.2" y="62.0" width="14.0" height="6.7" fill="#01f6b4"/><rect x="243.7" y="62.0" width="14.0" height="6.7" fill="#01f6b2"/><rect x="257.2" y="62.0" width="14.0" height="6.7" fill="#1bfc5c"/><rect x="270.8" y="62.0" width="14.0" height="6.7" fill="#19fe2e"/><rect x="284.3" y="62.0" width="14.0" height="6.7" fill="#13fe3b"/><rect x="297.8" y="62.0" width="14.0" height="6.7" fill="#07fe67"/><rect x="311.4" y="62.0" width="14.0" height="6.7" fill="#01f9ad"/><rect x="324.9" y="62.0" width="14.0" height="6.7" fill="#00f1c3"/><rect x="338.5" y="62.0" width="14.0" height="6.7" fill="#01f2bb"/><rect x="352.0" y="62.0" width="14.0" height="6.7" fill="#47fc0d"/><rect x="365.5" y="62.0" width="14.0" height="6.7" fill="#32fe12"/><rect x="379.1" y="62.0" width="14.0" height="6.7" fill="#30fe16"/><rect x="392.6" y="62.0" width="14.0" height="6.7" fill="#27fe1f"/><rect x="406.2" y="62.0" width="14.0" height="6.7" fill="#21fe23"/><rect x="419.7" y="62.0" width="14.0" height="6.7" fill="#19fe2e"/><rect x="433.2" y="62.0" width="14.0" height="6.7" fill="#31fd21"/><rect x="446.8" y="62.0" width="14.0" height="6.7" fill="#15fe39"/><rect x="460.3" y="62.0" width="14.0" height="6.7" fill="#06fd68"/><rect x="473.8" y="62.0" width="14.0" height="6.7" fill="#02f9a0"/><rect x="487.4" y="62.0" width="14.0" height="6.7" fill="#00ebcb"/><rect x="500.9" y="62.0" width="14.0" height="6.7" fill="#00deda"/><rect x="514.5" y="62.0" width="14.0" height="6.7" fill="#01dfd0"/><rect x="528.0" y="62.0" width="14.0" height="6.7" fill="#14fe4a"/><rect x="541.5" y="62.0" width="14.0" height="6.7" fill="#08fe6f"/><rect x="555.1" y="62.0" width="14.0" height="6.7" fill="#03fb8c"/><rect x="568.6" y="62.0" width="14.0" height="6.7" fill="#01f7af"/><rect x="582.2" y="62.0" width="14.0" height="6.7" fill="#01f3bd"/><rect x="595.7" y="62.0" width="14.0" height="6.7" fill="#01f7b2"/><rect x="609.2" y="62.0" width="14.0" height="6.7" fill="#08fa85"/><rect x="622.8" y="62.0" width="14.0" height="6.7" fill="#02fb9a"/><rect x="636.3" y="62.0" width="14.0" height="6.7" fill="#01f8b1"/><rect x="649.8" y="62.0" width="14.0" height="6.7" fill="#00f0be"/><rect x="663.4" y="62.0" width="14.0" height="6.7" fill="#00eec8"/><rect x="676.9" y="62.0" width="14.0" height="6.7" fill="#00eacc"/><rect x="690.5" y="62.0" width="14.0" height="6.7" fill="#01ebc7"/><rect x="0.0" y="55.8" width="14.0" height="6.7" fill="#10fe51"/><rect x="13.5" y="55.8" width="14.0" height="6.7" fill="#07fd70"/><rect x="27.1" y="55.8" width="14.0" height="6.7" fill="#03fb94"/><rect x="40.6" y="55.8" width="14.0" height="6.7" fill="#04fc7d"/><rect x="54.2" y="55.8" width="14.0" height="6.7" fill="#08fe5f"/><rect x="67.7" y="55.8" width="14.0" height="6.7" fill="#10fe45"/><rect x="81.2" y="55.8" width="14.0" height="6.7" fill="#20fe38"/><rect x="94.8" y="55.8" width="14.0" height="6.7" fill="#0afe5e"/><rect x="108.3" y="55.8" width="14.0" height="6.7" fill="#10ff45"/><rect x="121.8" y="55.8" width="14.0" height="6.7" fill="#22fe26"/><rect x="135.4" y="55.8" width="14.0" height="6.7" fill="#53fc08"/><rect x="148.9" y="55.8" width="14.0" height="6.7" fill="#7af902"/><rect x="162.5" y="55.8" width="14.0" height="6.7" fill="#9bf200"/><rect x="176.0" y="55.8" width="14.0" height="6.7" fill="#11fd4e"/><rect x="189.5" y="55.8" width="14.0" height="6.7" fill="#07fe68"/><rect x="203.1" y="55.8" width="14.0" height="6.7" fill="#06fe6e"/><rect x="216.6" y="55.8" width="14.0" height="6.7" fill="#08fe64"/><rect x="230.2" y="55.8" width="14.0" height="6.7" fill="#0cff54"/><rect x="243.7" y="55.8" width="14.0" height="6.7" fill="#12fe42"/><rect x="257.2" y="55.8" width="14.0" height="6.7" fill="#2cfd2a"/><rect x="270.8" y="55.8" width="14.0" height="6.7" fill="#16fe34"/><rect x="284.3" y="55.8" width="14.0" height="6.7" fill="#1bff2a"/><rect x="297.8" y="55.8" width="14.0" height="6.7" fill="#27fe1f"/><rect x="311.4" y="55.8" width="14.0" height="6.7" fill="#34fd13"/><rect x="324.9" y="55.8" width="14.0" height="6.7" fill="#42fe0c"/><rect x="338.5" y="55.8" width="14.0" height="6.7" fill="#58fb08"/><rect x="352.0" y="55.8" width="14.0" height="6.7" fill="#16fe48"/><rect x="365.5" y="55.8" width="14.0" height="6.7" fill="#0eff46"/><rect x="379.1" y="55.8" width="14.0" height="6.7" fill="#13fe3a"/><rect x="392.6" y="55.8" width="14.0" height="6.7" fill="#1cff29"/><rect x="406.2" y="55.8" width="14.0" height="6.7" fill="#23fe1d"/><rect x="419.7" y="55.8" width="14.0" height="6.7" fill="#2dfe19"/><rect x="433.2" y="55.8" width="14.0" height="6.7" fill="#3afd22"/><rect x="446.8" y="55.8" width="14.0" height="6.7" fill="#12fe34"/><rect x="460.3" y="55.8" width="14.0" height="6.7" fill="#16ff33"/><rect x="473.8" y="55.8" width="14.0" height="6.7" fill="#1bff28"/><rect x="487.4" y="55.8" width="14.0" height="6.7" fill="#23fe21"/><rect x="500.9" y="55.8" width="14.0" height="6.7" fill="#2efe17"/><rect x="514.5" y="55.8" width="14.0" height="6.7" fill="#4bfc0c"/><rect x="528.0" y="55.8" width="14.0" height="6.7" fill="#06fc85"/><rect x="541.5" y="55.8" width="14.0" height="6.7" fill="#04fd8b"/><rect x="555.1" y="55.8" width="14.0" height="6.7" fill="#06fe7d"/><rect x="568.6" y="55.8" width="14.0" height="6.7" fill="#0ffe47"/><rect x="582.2" y="55.8" width="14.0" height="6.7" fill="#1cfe2a"/><rect x="595.7" y="55.8" width="14.0" height="6.7" fill="#20fe23"/><rect x="609.2" y="55.8" width="14.0" height="6.7" fill="#25fd49"/><rect x="622.8" y="55.8" width="14.0" height="6.7" fill="#03fb95"/><rect x="636.3" y="55.8" width="14.0" height="6.7" fill="#04fc89"/><rect x="649.8" y="55.8" width="14.0" height="6.7" fill="#05fd71"/><rect x="663.4" y="55.8" width="14.0" height="6.7" fill="#0dfe55"/><rect x="676.9" y="55.8" width="14.0" height="6.7" fill="#18fe31"/><rect x="690.5" y="55.8" width="14.0" height="6.7" fill="#2ffe20"/><rect x="0.0" y="49.6" width="14.0" height="6.7" fill="#08fe62"/><rect x="13.5" y="49.6" width="14.0" height="6.7" fill="#01fd81"/><rect x="27.1" y="49.6" width="14.0" height="6.7" fill="#00f9a5"/><rect x="40.6" y="49.6" width="14.0" height="6.7" fill="#00fd90"/><rect x="54.2" y="49.6" width="14.0" height="6.7" fill="#02fd74"/><rect x="67.7" y="49.6" width="14.0" height="6.7" fill="#06ff4d"/><rect x="81.2" y="49.6" width="14.0" height="6.7" fill="#17fe45"/><rect x="94.8" y="49.6" width="14.0" height="6.7" fill="#02fe69"/><rect x="108.3" y="49.6" width="14.0" height="6.7" fill="#04fe50"/><rect x="121.8" y="49.6" width="14.0" height="6.7" fill="#18ff26"/><rect x="135.4" y="49.6" width="14.0" height="6.7" fill="#38fe0c"/><rect x="148.9" y="49.6" width="14.0" height="6.7" fill="#5bfe03"/><rect x="162.5" y="49.6" width="14.0" height="6.7" fill="#8afa01"/><rect x="176.0" y="49.6" width="14.0" height="6.7" fill="#07fe66"/><rect x="189.5" y="49.6" width="14.0" height="6.7" fill="#01fd75"/><rect x="203.1" y="49.6" width="14.0" height="6.7" fill="#01fe7e"/><rect x="216.6" y="49.6" width="14.0" height="6.7" fill="#02fe74"/><rect x="230.2" y="49.6" width="14.0" height="6.7" fill="#03fe5f"/><rect x="243.7" y="49.6" width="14.0" height="6.7" fill="#06fe4b"/><rect x="257.2" y="49.6" width="14.0" height="6.7" fill="#1cfe35"/><rect x="270.8" y="49.6" width="14.0" height="6.7" fill="#0afe3e"/><rect x="284.3" y="49.6" width="14.0" height="6.7" fill="#0eff32"/><rect x="297.8" y="49.6" width="14.0" height="6.7" fill="#16ff26"/><rect x="311.4" y="49.6" width="14.0" height="6.7" fill="#20fe18"/><rect x="324.9" y="49.6" width="14.0" height="6.7" fill="#32ff10"/><rect x="338.5" y="49.6" width="14.0" height="6.7" fill="#4efd09"/><rect x="352.0" y="49.6" width="14.0" height="6.7" fill="#0cfe51"/><rect x="365.5" y="49.6" width="14.0" height="6.7" fill="#03fe59"/><rect x="379.1" y="49.6" width="14.0" height="6.7" fill="#06ff4c"/><rect x="392.6" y="49.6" width="14.0" height="6.7" fill="#0dff32"/><rect x="406.2" y="49.6" width="14.0" height="6.7" fill="#12ff24"/><rect x="419.7" y="49.6" width="14.0" height="6.7" fill="#1bfe21"/><rect x="433.2" y="49.6" width="14.0" height="6.7" fill="#2afe22"/><rect x="446.8" y="49.6" width="14.0" height="6.7" fill="#08ff45"/><rect x="460.3" y="49.6" width="14.0" height="6.7" fill="#0aff3f"/><rect x="473.8" y="49.6" width="14.0" height="6.7" fill="#0dfe30"/><rect x="487.4" y="49.6" width="14.0" height="6.7" fill="#13ff2b"/><rect x="500.9" y="49.6" width="14.0" height="6.7" fill="#1efe1d"/><rect x="514.5" y="49.6" width="14.0" height="6.7" fill="#36fe12"/><rect x="528.0" y="49.6" width="14.0" height="6.7" fill="#02fa98"/><rect x="541.5" y="49.6" width="14.0" height="6.7" fill="#00fb9f"/><rect x="555.1" y="49.6" width="14.0" height="6.7" fill="#00fd91"/><rect x="568.6" y="49.6" width="14.0" height="6.7" fill="#07fe58"/><rect x="582.2" y="49.6" width="14.0" height="6.7" fill="#0fff34"/><rect x="595.7" y="49.6" width="14.0" height="6.7" fill="#13ff27"/><rect x="609.2" y="49.6" width="14.0" height="6.7" fill="#1bfd55"/><rect x="622.8" y="49.6" width="14.0" height="6.7" fill="#00fbab"/><rect x="636.3" y="49.6" width="14.0" height="6.7" fill="#00f99e"/><rect x="649.8" y="49.6" width="14.0" height="6.7" fill="#01fd85"/><rect x="663.4" y="49.6" width="14.0" height="6.7" fill="#03fe5e"/><rect x="676.9" y="49.6" width="14.0" height="6.7" fill="#0cfe3c"/><rect x="690.5" y="49.6" width="14.0" height="6.7" fill="#23fe24"/><rect x="0.0" y="43.4" width="14.0" height="6.7" fill="#05fd75"/><rect x="13.5" y="43.4" width="14.0" height="6.7" fill="#00fc94"/><rect x="27.1" y="43.4" width="14.0" height="6.7" fill="#00f9b6"/><rect x="40.6" y="43.4" width="14.0" height="6.7" fill="#00fd9f"/><rect x="54.2" y="43.4" width="14.0" height="6.7" fill="#01fd7f"/><rect x="67.7" y="43.4" width="14.0" height="6.7" fill="#05ff4d"/><rect x="81.2" y="43.4" width="14.0" height="6.7" fill="#13fe4c"/><rect x="94.8" y="43.4" width="14.0" height="6.7" fill="#02fe6d"/><rect x="108.3" y="43.4" width="14.0" height="6.7" fill="#03fe61"/><rect x="121.8" y="43.4" width="14.0" height="6.7" fill="#0cfe3b"/><rect x="135.4" y="43.4" width="14.0" height="6.7" fill="#21ff19"/><rect x="148.9" y="43.4" width="14.0" height="6.7" fill="#3dfe0c"/><rect x="162.5" y="43.4" width="14.0" height="6.7" fill="#62fc05"/><rect x="176.0" y="43.4" width="14.0" height="6.7" fill="#06fd71"/><rect x="189.5" y="43.4" width="14.0" height="6.7" fill="#00fd87"/><rect x="203.1" y="43.4" width="14.0" height="6.7" fill="#00fd8e"/><rect x="216.6" y="43.4" width="14.0" height="6.7" fill="#00fd8a"/><rect x="230.2" y="43.4" width="14.0" height="6.7" fill="#01fe75"/><rect x="243.7" y="43.4" width="14.0" height="6.7" fill="#03fe5c"/><rect x="257.2" y="43.4" width="14.0" height="6.7" fill="#1afe38"/><rect x="270.8" y="43.4" width="14.0" height="6.7" fill="#07fe43"/><rect x="284.3" y="43.4" width="14.0" height="6.7" fill="#0aff39"/><rect x="297.8" y="43.4" width="14.0" height="6.7" fill="#11ff2b"/><rect x="311.4" y="43.4" width="14.0" height="6.7" fill="#1eff1a"/><rect x="324.9" y="43.4" width="14.0" height="6.7" fill="#29ff13"/><rect x="338.5" y="43.4" width="14.0" height="6.7" fill="#3efc0e"/><rect x="352.0" y="43.4" width="14.0" height="6.7" fill="#05fe73"/><rect x="365.5" y="43.4" width="14.0" height="6.7" fill="#01fe7b"/><rect x="379.1" y="43.4" width="14.0" height="6.7" fill="#02fe6b"/><rect x="392.6" y="43.4" width="14.0" height="6.7" fill="#08ff44"/><rect x="406.2" y="43.4" width="14.0" height="6.7" fill="#0dff35"/><rect x="419.7" y="43.4" width="14.0" height="6.7" fill="#12ff29"/><rect x="433.2" y="43.4" width="14.0" height="6.7" fill="#24fe30"/><rect x="446.8" y="43.4" width="14.0" height="6.7" fill="#04fe51"/><rect x="460.3" y="43.4" width="14.0" height="6.7" fill="#06ff4d"/><rect x="473.8" y="43.4" width="14.0" height="6.7" fill="#0bff37"/><rect x="487.4" y="43.4" width="14.0" height="6.7" fill="#0fff2e"/><rect x="500.9" y="43.4" width="14.0" height="6.7" fill="#18ff1d"/><rect x="514.5" y="43.4" width="14.0" height="6.7" fill="#30fe18"/><rect x="528.0" y="43.4" width="14.0" height="6.7" fill="#02fb9a"/><rect x="541.5" y="43.4" width="14.0" height="6.7" fill="#00faa6"/><rect x="555.1" y="43.4" width="14.0" height="6.7" fill="#00fc9a"/><rect x="568.6" y="43.4" width="14.0" height="6.7" fill="#03fe5f"/><rect x="582.2" y="43.4" width="14.0" height="6.7" fill="#0bff35"/><rect x="595.7" y="43.4" width="14.0" height="6.7" fill="#0dff30"/><rect x="609.2" y="43.4" width="14.0" height="6.7" fill="#16fb5b"/><rect x="622.8" y="43.4" width="14.0" height="6.7" fill="#00f7b7"/><rect x="636.3" y="43.4" width="14.0" height="6.7" fill="#00f9ad"/><rect x="649.8" y="43.4" width="14.0" height="6.7" fill="#00fc9a"/><rect x="663.4" y="43.4" width="14.0" height="6.7" fill="#03fe6c"/><rect x="676.9" y="43.4" width="14.0" height="6.7" fill="#06fe47"/><rect x="690.5" y="43.4" width="14.0" height="6.7" fill="#18ff31"/><rect x="0.0" y="37.2" width="14.0" height="6.7" fill="#04fd7d"/><rect x="13.5" y="37.2" width="14.0" height="6.7" fill="#00faa4"/><rect x="27.1" y="37.2" width="14.0" height="6.7" fill="#00f5c3"/><rect x="40.6" y="37.2" width="14.0" height="6.7" fill="#00f9ad"/><rect x="54.2" y="37.2" width="14.0" height="6.7" fill="#00fd87"/><rect x="67.7" y="37.2" width="14.0" height="6.7" fill="#05fe4f"/><rect x="81.2" y="37.2" width="14.0" height="6.7" fill="#13fe4e"/><rect x="94.8" y="37.2" width="14.0" height="6.7" fill="#01fe79"/><rect x="108.3" y="37.2" width="14.0" height="6.7" fill="#02fe69"/><rect x="121.8" y="37.2" width="14.0" height="6.7" fill="#05ff4b"/><rect x="135.4" y="37.2" width="14.0" height="6.7" fill="#11ff2b"/><rect x="148.9" y="37.2" width="14.0" height="6.7" fill="#22ff18"/><rect x="162.5" y="37.2" width="14.0" height="6.7" fill="#41fe0c"/><rect x="176.0" y="37.2" width="14.0" height="6.7" fill="#05fd81"/><rect x="189.5" y="37.2" width="14.0" height="6.7" fill="#00fc94"/><rect x="203.1" y="37.2" width="14.0" height="6.7" fill="#00fba3"/><rect x="216.6" y="37.2" width="14.0" height="6.7" fill="#00fd95"/><rect x="230.2" y="37.2" width="14.0" height="6.7" fill="#01fd85"/><rect x="243.7" y="37.2" width="14.0" height="6.7" fill="#01fe6f"/><rect x="257.2" y="37.2" width="14.0" height="6.7" fill="#15fe47"/><rect x="270.8" y="37.2" width="14.0" height="6.7" fill="#06ff47"/><rect x="284.3" y="37.2" width="14.0" height="6.7" fill="#09ff41"/><rect x="297.8" y="37.2" width="14.0" height="6.7" fill="#0efe30"/><rect x="311.4" y="37.2" width="14.0" height="6.7" fill="#1aff1f"/><rect x="324.9" y="37.2" width="14.0" height="6.7" fill="#1fff1d"/><rect x="338.5" y="37.2" width="14.0" height="6.7" fill="#38fe11"/><rect x="352.0" y="37.2" width="14.0" height="6.7" fill="#02fc8f"/><rect x="365.5" y="37.2" width="14.0" height="6.7" fill="#00fba1"/><rect x="379.1" y="37.2" width="14.0" height="6.7" fill="#00fc98"/><rect x="392.6" y="37.2" width="14.0" height="6.7" fill="#03fe5f"/><rect x="406.2" y="37.2" width="14.0" height="6.7" fill="#09ff38"/><rect x="419.7" y="37.2" width="14.0" height="6.7" fill="#0bff37"/><rect x="433.2" y="37.2" width="14.0" height="6.7" fill="#1afe3e"/><rect x="446.8" y="37.2" width="14.0" height="6.7" fill="#03fe62"/><rect x="460.3" y="37.2" width="14.0" height="6.7" fill="#03fe5a"/><rect x="473.8" y="37.2" width="14.0" height="6.7" fill="#08fe4c"/><rect x="487.4" y="37.2" width="14.0" height="6.7" fill="#0dff33"/><rect x="500.9" y="37.2" width="14.0" height="6.7" fill="#13ff2b"/><rect x="514.5" y="37.2" width="14.0" height="6.7" fill="#21fe24"/><rect x="528.0" y="37.2" width="14.0" height="6.7" fill="#02f8a8"/><rect x="541.5" y="37.2" width="14.0" height="6.7" fill="#00f8b6"/><rect x="555.1" y="37.2" width="14.0" height="6.7" fill="#00faad"/><rect x="568.6" y="37.2" width="14.0" height="6.7" fill="#03fe68"/><rect x="582.2" y="37.2" width="14.0" height="6.7" fill="#09ff3b"/><rect x="595.7" y="37.2" width="14.0" height="6.7" fill="#0cff36"/><rect x="609.2" y="37.2" width="14.0" height="6.7" fill="#14fb68"/><rect x="622.8" y="37.2" width="14.0" height="6.7" fill="#00f5c4"/><rect x="636.3" y="37.2" width="14.0" height="6.7" fill="#00f4c3"/><rect x="649.8" y="37.2" width="14.0" height="6.7" fill="#00f8a8"/><rect x="663.4" y="37.2" width="14.0" height="6.7" fill="#01fe7e"/><rect x="676.9" y="37.2" width="14.0" height="6.7" fill="#05fe54"/><rect x="690.5" y="37.2" width="14.0" height="6.7" fill="#10fe3c"/><rect x="0.0" y="31.0" width="14.0" height="6.7" fill="#04fc88"/><rect x="13.5" y="31.0" width="14.0" height="6.7" fill="#00f8ab"/><rect x="27.1" y="31.0" width="14.0" height="6.7" fill="#00f3c8"/><rect x="40.6" y="31.0" width="14.0" height="6.7" fill="#00f7b9"/><rect x="54.2" y="31.0" width="14.0" height="6.7" fill="#01fc94"/><rect x="67.7" y="31.0" width="14.0" height="6.7" fill="#03fe59"/><rect x="81.2" y="31.0" width="14.0" height="6.7" fill="#10fe5a"/><rect x="94.8" y="31.0" width="14.0" height="6.7" fill="#00fd8f"/><rect x="108.3" y="31.0" width="14.0" height="6.7" fill="#00fe7c"/><rect x="121.8" y="31.0" width="14.0" height="6.7" fill="#03fd65"/><rect x="135.4" y="31.0" width="14.0" height="6.7" fill="#06fe47"/><rect x="148.9" y="31.0" width="14.0" height="6.7" fill="#12ff27"/><rect x="162.5" y="31.0" width="14.0" height="6.7" fill="#2dfe19"/><rect x="176.0" y="31.0" width="14.0" height="6.7" fill="#02fb97"/><rect x="189.5" y="31.0" width="14.0" height="6.7" fill="#00fab2"/><rect x="203.1" y="31.0" width="14.0" height="6.7" fill="#00f7be"/><rect x="216.6" y="31.0" width="14.0" height="6.7" fill="#00f9b3"/><rect x="230.2" y="31.0" width="14.0" height="6.7" fill="#00fca0"/><rect x="243.7" y="31.0" width="14.0" height="6.7" fill="#00fd86"/><rect x="257.2" y="31.0" width="14.0" height="6.7" fill="#11fd53"/><rect x="270.8" y="31.0" width="14.0" height="6.7" fill="#06fe4f"/><rect x="284.3" y="31.0" width="14.0" height="6.7" fill="#07fe44"/><rect x="297.8" y="31.0" width="14.0" height="6.7" fill="#0cff36"/><rect x="311.4" y="31.0" width="14.0" height="6.7" fill="#15ff23"/><rect x="324.9" y="31.0" width="14.0" height="6.7" fill="#1aff1d"/><rect x="338.5" y="31.0" width="14.0" height="6.7" fill="#2efe17"/><rect x="352.0" y="31.0" width="14.0" height="6.7" fill="#02faa6"/><rect x="365.5" y="31.0" width="14.0" height="6.7" fill="#00f6bf"/><rect x="379.1" y="31.0" width="14.0" height="6.7" fill="#00faaf"/><rect x="392.6" y="31.0" width="14.0" height="6.7" fill="#01fe7f"/><rect x="406.2" y="31.0" width="14.0" height="6.7" fill="#06fe50"/><rect x="419.7" y="31.0" width="14.0" height="6.7" fill="#08ff4a"/><rect x="433.2" y="31.0" width="14.0" height="6.7" fill="#14fe4a"/><rect x="446.8" y="31.0" width="14.0" height="6.7" fill="#01fe70"/><rect x="460.3" y="31.0" width="14.0" height="6.7" fill="#01fe69"/><rect x="473.8" y="31.0" width="14.0" height="6.7" fill="#04fe5a"/><rect x="487.4" y="31.0" width="14.0" height="6.7" fill="#09fe3f"/><rect x="500.9" y="31.0" width="14.0" height="6.7" fill="#0dfe30"/><rect x="514.5" y="31.0" width="14.0" height="6.7" fill="#1efe24"/><rect x="528.0" y="31.0" width="14.0" height="6.7" fill="#01f7b2"/><rect x="541.5" y="31.0" width="14.0" height="6.7" fill="#00f6bd"/><rect x="555.1" y="31.0" width="14.0" height="6.7" fill="#00f9b6"/><rect x="568.6" y="31.0" width="14.0" height="6.7" fill="#01fe76"/><rect x="582.2" y="31.0" width="14.0" height="6.7" fill="#06ff4d"/><rect x="595.7" y="31.0" width="14.0" height="6.7" fill="#07ff43"/><rect x="609.2" y="31.0" width="14.0" height="6.7" fill="#11f86f"/><rect x="622.8" y="31.0" width="14.0" height="6.7" fill="#00f0d1"/><rect x="636.3" y="31.0" width="14.0" height="6.7" fill="#00efd3"/><rect x="649.8" y="31.0" width="14.0" height="6.7" fill="#00f2c1"/><rect x="663.4" y="31.0" width="14.0" height="6.7" fill="#00fc96"/><rect x="676.9" y="31.0" width="14.0" height="6.7" fill="#01fe70"/><rect x="690.5" y="31.0" width="14.0" height="6.7" fill="#10ff47"/><rect x="0.0" y="24.8" width="14.0" height="6.7" fill="#03fb91"/><rect x="13.5" y="24.8" width="14.0" height="6.7" fill="#00f6b5"/><rect x="27.1" y="24.8" width="14.0" height="6.7" fill="#00eed4"/><rect x="40.6" y="24.8" width="14.0" height="6.7" fill="#00f3c8"/><rect x="54.2" y="24.8" width="14.0" height="6.7" fill="#00f8a7"/><rect x="67.7" y="24.8" width="14.0" height="6.7" fill="#03fe62"/><rect x="81.2" y="24.8" width="14.0" height="6.7" fill="#0efe60"/><rect x="94.8" y="24.8" width="14.0" height="6.7" fill="#00fd94"/><rect x="108.3" y="24.8" width="14.0" height="6.7" fill="#00fd88"/><rect x="121.8" y="24.8" width="14.0" height="6.7" fill="#02fe70"/><rect x="135.4" y="24.8" width="14.0" height="6.7" fill="#02fe5b"/><rect x="148.9" y="24.8" width="14.0" height="6.7" fill="#08fe47"/><rect x="162.5" y="24.8" width="14.0" height="6.7" fill="#1afe2b"/><rect x="176.0" y="24.8" width="14.0" height="6.7" fill="#01faa7"/><rect x="189.5" y="24.8" width="14.0" height="6.7" fill="#00f4c1"/><rect x="203.1" y="24.8" width="14.0" height="6.7" fill="#00ecd5"/><rect x="216.6" y="24.8" width="14.0" height="6.7" fill="#00ebd3"/><rect x="230.2" y="24.8" width="14.0" height="6.7" fill="#00f5c5"/><rect x="243.7" y="24.8" width="14.0" height="6.7" fill="#00f9ac"/><rect x="257.2" y="24.8" width="14.0" height="6.7" fill="#0cfe5f"/><rect x="270.8" y="24.8" width="14.0" height="6.7" fill="#03ff59"/><rect x="284.3" y="24.8" width="14.0" height="6.7" fill="#05ff49"/><rect x="297.8" y="24.8" width="14.0" height="6.7" fill="#0cff3a"/><rect x="311.4" y="24.8" width="14.0" height="6.7" fill="#11fe2c"/><rect x="324.9" y="24.8" width="14.0" height="6.7" fill="#18ff1f"/><rect x="338.5" y="24.8" width="14.0" height="6.7" fill="#27fe1b"/><rect x="352.0" y="24.8" width="14.0" height="6.7" fill="#01f4bb"/><rect x="365.5" y="24.8" width="14.0" height="6.7" fill="#00f1cd"/><rect x="379.1" y="24.8" width="14.0" height="6.7" fill="#00f2c8"/><rect x="392.6" y="24.8" width="14.0" height="6.7" fill="#00fb98"/><rect x="406.2" y="24.8" width="14.0" height="6.7" fill="#01fe70"/><rect x="419.7" y="24.8" width="14.0" height="6.7" fill="#04fe5a"/><rect x="433.2" y="24.8" width="14.0" height="6.7" fill="#10fe56"/><rect x="446.8" y="24.8" width="14.0" height="6.7" fill="#01fd7f"/><rect x="460.3" y="24.8" width="14.0" height="6.7" fill="#01fe7a"/><rect x="473.8" y="24.8" width="14.0" height="6.7" fill="#02fe69"/><rect x="487.4" y="24.8" width="14.0" height="6.7" fill="#07fe48"/><rect x="500.9" y="24.8" width="14.0" height="6.7" fill="#0aff3d"/><rect x="514.5" y="24.8" width="14.0" height="6.7" fill="#1dfe29"/><rect x="528.0" y="24.8" width="14.0" height="6.7" fill="#00f3bb"/><rect x="541.5" y="24.8" width="14.0" height="6.7" fill="#00f1cd"/><rect x="555.1" y="24.8" width="14.0" height="6.7" fill="#00f3c9"/><rect x="568.6" y="24.8" width="14.0" height="6.7" fill="#01fd88"/><rect x="582.2" y="24.8" width="14.0" height="6.7" fill="#04fe5b"/><rect x="595.7" y="24.8" width="14.0" height="6.7" fill="#06ff4e"/><rect x="609.2" y="24.8" width="14.0" height="6.7" fill="#0df57b"/><rect x="622.8" y="24.8" width="14.0" height="6.7" fill="#00e8db"/><rect x="636.3" y="24.8" width="14.0" height="6.7" fill="#00e9dd"/><rect x="649.8" y="24.8" width="14.0" height="6.7" fill="#00f2d0"/><rect x="663.4" y="24.8" width="14.0" height="6.7" fill="#00f8b3"/><rect x="676.9" y="24.8" width="14.0" height="6.7" fill="#01fc84"/><rect x="690.5" y="24.8" width="14.0" height="6.7" fill="#0cfe58"/><rect x="0.0" y="18.6" width="14.0" height="6.7" fill="#03fc92"/><rect x="13.5" y="18.6" width="14.0" height="6.7" fill="#00f3bb"/><rect x="27.1" y="18.6" width="14.0" height="6.7" fill="#00ebd5"/><rect x="40.6" y="18.6" width="14.0" height="6.7" fill="#00f1cd"/><rect x="54.2" y="18.6" width="14.0" height="6.7" fill="#00faac"/><rect x="67.7" y="18.6" width="14.0" height="6.7" fill="#03fe68"/><rect x="81.2" y="18.6" width="14.0" height="6.7" fill="#0efd65"/><rect x="94.8" y="18.6" width="14.0" height="6.7" fill="#00fba7"/><rect x="108.3" y="18.6" width="14.0" height="6.7" fill="#00fd9b"/><rect x="121.8" y="18.6" width="14.0" height="6.7" fill="#00fd84"/><rect x="135.4" y="18.6" width="14.0" height="6.7" fill="#01fe6f"/><rect x="148.9" y="18.6" width="14.0" height="6.7" fill="#04ff53"/><rect x="162.5" y="18.6" width="14.0" height="6.7" fill="#10fe3c"/><rect x="176.0" y="18.6" width="14.0" height="6.7" fill="#00f5b9"/><rect x="189.5" y="18.6" width="14.0" height="6.7" fill="#00f0d3"/><rect x="203.1" y="18.6" width="14.0" height="6.7" fill="#00e4e5"/><rect x="216.6" y="18.6" width="14.0" height="6.7" fill="#00dee5"/><rect x="230.2" y="18.6" width="14.0" height="6.7" fill="#00efd6"/><rect x="243.7" y="18.6" width="14.0" height="6.7" fill="#00f5c1"/><rect x="257.2" y="18.6" width="14.0" height="6.7" fill="#0afc73"/><rect x="270.8" y="18.6" width="14.0" height="6.7" fill="#03fe62"/><rect x="284.3" y="18.6" width="14.0" height="6.7" fill="#04fe58"/><rect x="297.8" y="18.6" width="14.0" height="6.7" fill="#09fe41"/><rect x="311.4" y="18.6" width="14.0" height="6.7" fill="#0dff35"/><rect x="324.9" y="18.6" width="14.0" height="6.7" fill="#14ff28"/><rect x="338.5" y="18.6" width="14.0" height="6.7" fill="#2afe1e"/><rect x="352.0" y="18.6" width="14.0" height="6.7" fill="#01ebca"/><rect x="365.5" y="18.6" width="14.0" height="6.7" fill="#00ebd5"/><rect x="379.1" y="18.6" width="14.0" height="6.7" fill="#00eed3"/><rect x="392.6" y="18.6" width="14.0" height="6.7" fill="#00fbad"/><rect x="406.2" y="18.6" width="14.0" height="6.7" fill="#00fe85"/><rect x="419.7" y="18.6" width="14.0" height="6.7" fill="#01fe74"/><rect x="433.2" y="18.6" width="14.0" height="6.7" fill="#0cfd67"/><rect x="446.8" y="18.6" width="14.0" height="6.7" fill="#00fd95"/><rect x="460.3" y="18.6" width="14.0" height="6.7" fill="#00fd89"/><rect x="473.8" y="18.6" width="14.0" height="6.7" fill="#01fe74"/><rect x="487.4" y="18.6" width="14.0" height="6.7" fill="#03fe5e"/><rect x="500.9" y="18.6" width="14.0" height="6.7" fill="#07fe3e"/><rect x="514.5" y="18.6" width="14.0" height="6.7" fill="#19ff2d"/><rect x="528.0" y="18.6" width="14.0" height="6.7" fill="#00efc8"/><rect x="541.5" y="18.6" width="14.0" height="6.7" fill="#00eed4"/><rect x="555.1" y="18.6" width="14.0" height="6.7" fill="#00f0cf"/><rect x="568.6" y="18.6" width="14.0" height="6.7" fill="#00fb99"/><rect x="582.2" y="18.6" width="14.0" height="6.7" fill="#03fe69"/><rect x="595.7" y="18.6" width="14.0" height="6.7" fill="#03fe5e"/><rect x="609.2" y="18.6" width="14.0" height="6.7" fill="#0af383"/><rect x="622.8" y="18.6" width="14.0" height="6.7" fill="#00e1e1"/><rect x="636.3" y="18.6" width="14.0" height="6.7" fill="#00e3e3"/><rect x="649.8" y="18.6" width="14.0" height="6.7" fill="#00e9dc"/><rect x="663.4" y="18.6" width="14.0" height="6.7" fill="#00f3c5"/><rect x="676.9" y="18.6" width="14.0" height="6.7" fill="#00fb9a"/><rect x="690.5" y="18.6" width="14.0" height="6.7" fill="#07fe63"/><rect x="0.0" y="12.4" width="14.0" height="6.7" fill="#04fd86"/><rect x="13.5" y="12.4" width="14.0" height="6.7" fill="#00f6ad"/><rect x="27.1" y="12.4" width="14.0" height="6.7" fill="#00efcd"/><rect x="40.6" y="12.4" width="14.0" height="6.7" fill="#00f3d0"/><rect x="54.2" y="12.4" width="14.0" height="6.7" fill="#00f8ad"/><rect x="67.7" y="12.4" width="14.0" height="6.7" fill="#03fe70"/><rect x="81.2" y="12.4" width="14.0" height="6.7" fill="#0afc6c"/><rect x="94.8" y="12.4" width="14.0" height="6.7" fill="#00faac"/><rect x="108.3" y="12.4" width="14.0" height="6.7" fill="#00fcaa"/><rect x="121.8" y="12.4" width="14.0" height="6.7" fill="#00fc9c"/><rect x="135.4" y="12.4" width="14.0" height="6.7" fill="#01fd7e"/><rect x="148.9" y="12.4" width="14.0" height="6.7" fill="#02fe67"/><rect x="162.5" y="12.4" width="14.0" height="6.7" fill="#0ffe51"/><rect x="176.0" y="12.4" width="14.0" height="6.7" fill="#01f1bf"/><rect x="189.5" y="12.4" width="14.0" height="6.7" fill="#00ead6"/><rect x="203.1" y="12.4" width="14.0" height="6.7" fill="#00dce7"/><rect x="216.6" y="12.4" width="14.0" height="6.7" fill="#00e1e6"/><rect x="230.2" y="12.4" width="14.0" height="6.7" fill="#00e7df"/><rect x="243.7" y="12.4" width="14.0" height="6.7" fill="#00f2ca"/><rect x="257.2" y="12.4" width="14.0" height="6.7" fill="#0bfb77"/><rect x="270.8" y="12.4" width="14.0" height="6.7" fill="#02fe6c"/><rect x="284.3" y="12.4" width="14.0" height="6.7" fill="#03fe61"/><rect x="297.8" y="12.4" width="14.0" height="6.7" fill="#06fe4c"/><rect x="311.4" y="12.4" width="14.0" height="6.7" fill="#0aff37"/><rect x="324.9" y="12.4" width="14.0" height="6.7" fill="#12ff2f"/><rect x="338.5" y="12.4" width="14.0" height="6.7" fill="#23fe26"/><rect x="352.0" y="12.4" width="14.0" height="6.7" fill="#00eccc"/><rect x="365.5" y="12.4" width="14.0" height="6.7" fill="#00e5db"/><rect x="379.1" y="12.4" width="14.0" height="6.7" fill="#00edd8"/><rect x="392.6" y="12.4" width="14.0" height="6.7" fill="#00f9b5"/><rect x="406.2" y="12.4" width="14.0" height="6.7" fill="#00fc92"/><rect x="419.7" y="12.4" width="14.0" height="6.7" fill="#01fe78"/><rect x="433.2" y="12.4" width="14.0" height="6.7" fill="#0afd73"/><rect x="446.8" y="12.4" width="14.0" height="6.7" fill="#00fc9a"/><rect x="460.3" y="12.4" width="14.0" height="6.7" fill="#00fb9a"/><rect x="473.8" y="12.4" width="14.0" height="6.7" fill="#00fe7f"/><rect x="487.4" y="12.4" width="14.0" height="6.7" fill="#01ff6e"/><rect x="500.9" y="12.4" width="14.0" height="6.7" fill="#06ff4e"/><rect x="514.5" y="12.4" width="14.0" height="6.7" fill="#17fe34"/><rect x="528.0" y="12.4" width="14.0" height="6.7" fill="#00ecc6"/><rect x="541.5" y="12.4" width="14.0" height="6.7" fill="#00e9da"/><rect x="555.1" y="12.4" width="14.0" height="6.7" fill="#00f0d0"/><rect x="568.6" y="12.4" width="14.0" height="6.7" fill="#00faab"/><rect x="582.2" y="12.4" width="14.0" height="6.7" fill="#01fe79"/><rect x="595.7" y="12.4" width="14.0" height="6.7" fill="#02fe6f"/><rect x="609.2" y="12.4" width="14.0" height="6.7" fill="#07f38d"/><rect x="622.8" y="12.4" width="14.0" height="6.7" fill="#00e1e3"/><rect x="636.3" y="12.4" width="14.0" height="6.7" fill="#00daea"/><rect x="649.8" y="12.4" width="14.0" height="6.7" fill="#00e3e0"/><rect x="663.4" y="12.4" width="14.0" height="6.7" fill="#00efd1"/><rect x="676.9" y="12.4" width="14.0" height="6.7" fill="#00faa5"/><rect x="690.5" y="12.4" width="14.0" height="6.7" fill="#07fe74"/><rect x="0.0" y="6.2" width="14.0" height="6.7" fill="#03fd87"/><rect x="13.5" y="6.2" width="14.0" height="6.7" fill="#00f9a6"/><rect x="27.1" y="6.2" width="14.0" height="6.7" fill="#00f1c8"/><rect x="40.6" y="6.2" width="14.0" height="6.7" fill="#00f4c5"/><rect x="54.2" y="6.2" width="14.0" height="6.7" fill="#00f9b4"/><rect x="67.7" y="6.2" width="14.0" height="6.7" fill="#01fe74"/><rect x="81.2" y="6.2" width="14.0" height="6.7" fill="#0afd71"/><rect x="94.8" y="6.2" width="14.0" height="6.7" fill="#00f7b6"/><rect x="108.3" y="6.2" width="14.0" height="6.7" fill="#00f9b1"/><rect x="121.8" y="6.2" width="14.0" height="6.7" fill="#00fba1"/><rect x="135.4" y="6.2" width="14.0" height="6.7" fill="#00fd8f"/><rect x="148.9" y="6.2" width="14.0" height="6.7" fill="#01fe77"/><rect x="162.5" y="6.2" width="14.0" height="6.7" fill="#0afe58"/><rect x="176.0" y="6.2" width="14.0" height="6.7" fill="#00eec7"/><rect x="189.5" y="6.2" width="14.0" height="6.7" fill="#00e5e1"/><rect x="203.1" y="6.2" width="14.0" height="6.7" fill="#00dbe9"/><rect x="216.6" y="6.2" width="14.0" height="6.7" fill="#00d5ed"/><rect x="230.2" y="6.2" width="14.0" height="6.7" fill="#00e1e4"/><rect x="243.7" y="6.2" width="14.0" height="6.7" fill="#00efcc"/><rect x="257.2" y="6.2" width="14.0" height="6.7" fill="#07f981"/><rect x="270.8" y="6.2" width="14.0" height="6.7" fill="#01fd70"/><rect x="284.3" y="6.2" width="14.0" height="6.7" fill="#02fe73"/><rect x="297.8" y="6.2" width="14.0" height="6.7" fill="#05fe53"/><rect x="311.4" y="6.2" width="14.0" height="6.7" fill="#09ff3d"/><rect x="324.9" y="6.2" width="14.0" height="6.7" fill="#0eff35"/><rect x="338.5" y="6.2" width="14.0" height="6.7" fill="#20fe29"/><rect x="352.0" y="6.2" width="14.0" height="6.7" fill="#00e7d2"/><rect x="365.5" y="6.2" width="14.0" height="6.7" fill="#00e1e4"/><rect x="379.1" y="6.2" width="14.0" height="6.7" fill="#00e7db"/><rect x="392.6" y="6.2" width="14.0" height="6.7" fill="#00f8bd"/><rect x="406.2" y="6.2" width="14.0" height="6.7" fill="#00fc95"/><rect x="419.7" y="6.2" width="14.0" height="6.7" fill="#01fe81"/><rect x="433.2" y="6.2" width="14.0" height="6.7" fill="#0afd70"/><rect x="446.8" y="6.2" width="14.0" height="6.7" fill="#00f9a8"/><rect x="460.3" y="6.2" width="14.0" height="6.7" fill="#00fb99"/><rect x="473.8" y="6.2" width="14.0" height="6.7" fill="#00fc92"/><rect x="487.4" y="6.2" width="14.0" height="6.7" fill="#01fd7e"/><rect x="500.9" y="6.2" width="14.0" height="6.7" fill="#04fe5d"/><rect x="514.5" y="6.2" width="14.0" height="6.7" fill="#11fe3c"/><rect x="528.0" y="6.2" width="14.0" height="6.7" fill="#00edc9"/><rect x="541.5" y="6.2" width="14.0" height="6.7" fill="#00e9d5"/><rect x="555.1" y="6.2" width="14.0" height="6.7" fill="#00eed5"/><rect x="568.6" y="6.2" width="14.0" height="6.7" fill="#00f9a8"/><rect x="582.2" y="6.2" width="14.0" height="6.7" fill="#01fd8a"/><rect x="595.7" y="6.2" width="14.0" height="6.7" fill="#01fd82"/><rect x="609.2" y="6.2" width="14.0" height="6.7" fill="#07f592"/><rect x="622.8" y="6.2" width="14.0" height="6.7" fill="#00dee6"/><rect x="636.3" y="6.2" width="14.0" height="6.7" fill="#00daeb"/><rect x="649.8" y="6.2" width="14.0" height="6.7" fill="#00dbeb"/><rect x="663.4" y="6.2" width="14.0" height="6.7" fill="#00e4df"/><rect x="676.9" y="6.2" width="14.0" height="6.7" fill="#00f6b8"/><rect x="690.5" y="6.2" width="14.0" height="6.7" fill="#04fc7e"/><rect x="0.0" y="0.0" width="14.0" height="6.7" fill="#05fd82"/><rect x="13.5" y="0.0" width="14.0" height="6.7" fill="#00f9a6"/><rect x="27.1" y="0.0" width="14.0" height="6.7" fill="#00f4c8"/><rect x="40.6" y="0.0" width="14.0" height="6.7" fill="#00f3c9"/><rect x="54.2" y="0.0" width="14.0" height="6.7" fill="#00f9b0"/><rect x="67.7" y="0.0" width="14.0" height="6.7" fill="#00fc7f"/><rect x="81.2" y="0.0" width="14.0" height="6.7" fill="#09fd75"/><rect x="94.8" y="0.0" width="14.0" height="6.7" fill="#00f9ba"/><rect x="108.3" y="0.0" width="14.0" height="6.7" fill="#00f7b4"/><rect x="121.8" y="0.0" width="14.0" height="6.7" fill="#00fbab"/><rect x="135.4" y="0.0" width="14.0" height="6.7" fill="#00fd97"/><rect x="148.9" y="0.0" width="14.0" height="6.7" fill="#00fe79"/><rect x="162.5" y="0.0" width="14.0" height="6.7" fill="#07fe62"/><rect x="176.0" y="0.0" width="14.0" height="6.7" fill="#00edc7"/><rect x="189.5" y="0.0" width="14.0" height="6.7" fill="#00e4df"/><rect x="203.1" y="0.0" width="14.0" height="6.7" fill="#00d9ea"/><rect x="216.6" y="0.0" width="14.0" height="6.7" fill="#00d2ed"/><rect x="230.2" y="0.0" width="14.0" height="6.7" fill="#00dfe6"/><rect x="243.7" y="0.0" width="14.0" height="6.7" fill="#00efd2"/><rect x="257.2" y="0.0" width="14.0" height="6.7" fill="#06f986"/><rect x="270.8" y="0.0" width="14.0" height="6.7" fill="#01fe74"/><rect x="284.3" y="0.0" width="14.0" height="6.7" fill="#01fe76"/><rect x="297.8" y="0.0" width="14.0" height="6.7" fill="#03fe61"/><rect x="311.4" y="0.0" width="14.0" height="6.7" fill="#08ff43"/><rect x="324.9" y="0.0" width="14.0" height="6.7" fill="#0efe35"/><rect x="338.5" y="0.0" width="14.0" height="6.7" fill="#1efe28"/><rect x="352.0" y="0.0" width="14.0" height="6.7" fill="#00e5d2"/><rect x="365.5" y="0.0" width="14.0" height="6.7" fill="#00e5e1"/><rect x="379.1" y="0.0" width="14.0" height="6.7" fill="#00e6dc"/><rect x="392.6" y="0.0" width="14.0" height="6.7" fill="#00f8bb"/><rect x="406.2" y="0.0" width="14.0" height="6.7" fill="#00fc9d"/><rect x="419.7" y="0.0" width="14.0" height="6.7" fill="#00fd84"/><rect x="433.2" y="0.0" width="14.0" height="6.7" fill="#07fd76"/><rect x="446.8" y="0.0" width="14.0" height="6.7" fill="#00fba9"/><rect x="460.3" y="0.0" width="14.0" height="6.7" fill="#00faa6"/><rect x="473.8" y="0.0" width="14.0" height="6.7" fill="#00fc9a"/><rect x="487.4" y="0.0" width="14.0" height="6.7" fill="#01fe7e"/><rect x="500.9" y="0.0" width="14.0" height="6.7" fill="#03ff5f"/><rect x="514.5" y="0.0" width="14.0" height="6.7" fill="#12ff43"/><rect x="528.0" y="0.0" width="14.0" height="6.7" fill="#00edca"/><rect x="541.5" y="0.0" width="14.0" height="6.7" fill="#00edd6"/><rect x="555.1" y="0.0" width="14.0" height="6.7" fill="#00ecd4"/><rect x="568.6" y="0.0" width="14.0" height="6.7" fill="#00fbae"/><rect x="582.2" y="0.0" width="14.0" height="6.7" fill="#00fd8b"/><rect x="595.7" y="0.0" width="14.0" height="6.7" fill="#00fd83"/><rect x="609.2" y="0.0" width="14.0" height="6.7" fill="#06f496"/><rect x="622.8" y="0.0" width="14.0" height="6.7" fill="#00dfe3"/><rect x="636.3" y="0.0" width="14.0" height="6.7" fill="#00dae7"/><rect x="649.8" y="0.0" width="14.0" height="6.7" fill="#00daea"/><rect x="663.4" y="0.0" width="14.0" height="6.7" fill="#00dfe4"/><rect x="676.9" y="0.0" width="14.0" height="6.7" fill="#00f6bb"/><rect x="690.5" y="0.0" width="14.0" height="6.7" fill="#03fe81"/></svg>
<canvas id="hm" width="416" height="161"></canvas>
<svg id="ov" width="896" height="672" viewBox="0 0 896 672"><path d="M95.5 21.5H798.5V145.5H95.5Z" fill="none" stroke="#000" stroke-width="1"/>
<line x1="96" y1="129.5" x2="117" y2="129.5" stroke="#000" stroke-width="1" />
<line x1="96" y1="114.5" x2="117" y2="114.5" stroke="#000" stroke-width="1" />
<line x1="96" y1="98.5" x2="117" y2="98.5" stroke="#000" stroke-width="1" />
<line x1="96" y1="83.5" x2="117" y2="83.5" stroke="#000" stroke-width="1" />
<line x1="96" y1="67.5" x2="117" y2="67.5" stroke="#000" stroke-width="1" />
<line x1="96" y1="52.5" x2="117" y2="52.5" stroke="#000" stroke-width="1" />
<line x1="96" y1="36.5" x2="117" y2="36.5" stroke="#000" stroke-width="1" />
<text x="91" y="150.3" font-family="Liberation Serif" font-size="11.5" font-weight="normal" text-anchor="end" >0</text>
<text x="91" y="134.8" font-family="Liberation Serif" font-size="11.5" font-weight="normal" text-anchor="end" >20</text>
<text x="91" y="119.3" font-family="Liberation Serif" font-size="11.5" font-weight="normal" text-anchor="end" >40</text>
<text x="91" y="103.8" font-family="Liberation Serif" font-size="11.5" font-weight="normal" text-anchor="end" >60</text>
<text x="91" y="88.3" font-family="Liberation Serif" font-size="11.5" font-weight="normal" text-anchor="end" >80</text>
<text x="91" y="72.8" font-family="Liberation Serif" font-size="11.5" font-weight="normal" text-anchor="end" >100</text>
<text x="91" y="57.3" font-family="Liberation Serif" font-size="11.5" font-weight="normal" text-anchor="end" >120</text>
<text x="91" y="41.8" font-family="Liberation Serif" font-size="11.5" font-weight="normal" text-anchor="end" >140</text>
<text x="91" y="26.3" font-family="Liberation Serif" font-size="11.5" font-weight="normal" text-anchor="end" >160</text>
<line x1="179.5" y1="141" x2="179.5" y2="145" stroke="#000" stroke-width="1" />
<line x1="264.5" y1="141" x2="264.5" y2="145" stroke="#000" stroke-width="1" />
<line x1="348.5" y1="141" x2="348.5" y2="145" stroke="#000" stroke-width="1" />
<line x1="433.5" y1="141" x2="433.5" y2="145" stroke="#000" stroke-width="1" />
<line x1="517.5" y1="141" x2="517.5" y2="145" stroke="#000" stroke-width="1" />
<line x1="602.5" y1="141" x2="602.5" y2="145" stroke="#000" stroke-width="1" />
<line x1="686.5" y1="141" x2="686.5" y2="145" stroke="#000" stroke-width="1" />
<line x1="771.5" y1="141" x2="771.5" y2="145" stroke="#000" stroke-width="1" />
<text x="96.0" y="154.7" font-family="Liberation Serif" font-size="11.5" font-weight="normal" text-anchor="middle" >0</text>
<text x="180.495" y="154.7" font-family="Liberation Serif" font-size="11.5" font-weight="normal" text-anchor="middle" >50</text>
<text x="264.99" y="154.7" font-family="Liberation Serif" font-size="11.5" font-weight="normal" text-anchor="middle" >100</text>
<text x="349.485" y="154.7" font-family="Liberation Serif" font-size="11.5" font-weight="normal" text-anchor="middle" >150</text>
<text x="433.98" y="154.7" font-family="Liberation Serif" font-size="11.5" font-weight="normal" text-anchor="middle" >200</text>
<text x="518.4749999999999" y="154.7" font-family="Liberation Serif" font-size="11.5" font-weight="normal" text-anchor="middle" >250</text>
<text x="602.97" y="154.7" font-family="Liberation Serif" font-size="11.5" font-weight="normal" text-anchor="middle" >300</text>
<text x="687.465" y="154.7" font-family="Liberation Serif" font-size="11.5" font-weight="normal" text-anchor="middle" >350</text>
<text x="771.96" y="154.7" font-family="Liberation Serif" font-size="11.5" font-weight="normal" text-anchor="middle" >400</text>
<text x="95.5" y="17.6" font-family="Liberation Serif" font-size="14" font-weight="normal" text-anchor="start" >Vcal threshold</text>
<rect x="802" y="138" width="40" height="7" fill="#6300FF"/>
<rect x="802" y="132" width="40" height="6" fill="#3300FF"/>
<rect x="802" y="126" width="40" height="6" fill="#0014FF"/>
<rect x="802" y="120" width="40" height="6" fill="#0044FF"/>
<rect x="802" y="114" width="40" height="6" fill="#008BFF"/>
<rect x="802" y="108" width="40" height="6" fill="#00BBFF"/>
<rect x="802" y="101" width="40" height="7" fill="#00FFFC"/>
<rect x="802" y="95" width="40" height="6" fill="#00FFCC"/>
<rect x="802" y="89" width="40" height="6" fill="#00FF85"/>
<rect x="802" y="82" width="40" height="7" fill="#00FF55"/>
<rect x="802" y="76" width="40" height="6" fill="#00FF0E"/>
<rect x="802" y="70" width="40" height="6" fill="#22FF00"/>
<rect x="802" y="64" width="40" height="6" fill="#69FF00"/>
<rect x="802" y="58" width="40" height="6" fill="#99FF00"/>
<rect x="802" y="52" width="40" height="6" fill="#E0FF00"/>
<rect x="802" y="46" width="40" height="6" fill="#FFEE00"/>
<rect x="802" y="40" width="40" height="6" fill="#FFA700"/>
<rect x="802" y="33" width="40" height="7" fill="#FF7700"/>
<rect x="802" y="27" width="40" height="6" fill="#FF3000"/>
<rect x="802" y="21" width="40" height="6" fill="#FF0000"/>
<line x1="842.5" y1="21" x2="842.5" y2="145.5" stroke="#000" stroke-width="1" />
<line x1="821" y1="145.5" x2="842" y2="145.5" stroke="#000" stroke-width="1" />
<text x="846" y="146.6" font-family="Liberation Sans" font-size="6" font-weight="bold" text-anchor="start" >80</text>
<line x1="821" y1="122.5" x2="842" y2="122.5" stroke="#000" stroke-width="1" />
<text x="846" y="124.1" font-family="Liberation Sans" font-size="6" font-weight="bold" text-anchor="start" >90</text>
<line x1="821" y1="100.5" x2="842" y2="100.5" stroke="#000" stroke-width="1" />
<text x="846" y="101.85" font-family="Liberation Sans" font-size="6" font-weight="bold" text-anchor="start" >100</text>
<line x1="821" y1="77.5" x2="842" y2="77.5" stroke="#000" stroke-width="1" />
<text x="846" y="79.35" font-family="Liberation Sans" font-size="6" font-weight="bold" text-anchor="start" >110</text>
<line x1="821" y1="55.5" x2="842" y2="55.5" stroke="#000" stroke-width="1" />
<text x="846" y="56.85" font-family="Liberation Sans" font-size="6" font-weight="bold" text-anchor="start" >120</text>
<line x1="821" y1="32.5" x2="842" y2="32.5" stroke="#000" stroke-width="1" />
<text x="846" y="34.35" font-family="Liberation Sans" font-size="6" font-weight="bold" text-anchor="start" >130</text>
<text x="821.8" y="17.6" font-family="Liberation Serif" font-size="14" font-weight="normal" text-anchor="end" >M0143-070109.08:59T-10b</text>
<path d="M95.5 189.5H798.5V313.5H95.5Z" fill="none" stroke="#000" stroke-width="1"/>
<line x1="96" y1="297.5" x2="117" y2="297.5" stroke="#000" stroke-width="1" />
<line x1="96" y1="282.5" x2="117" y2="282.5" stroke="#000" stroke-width="1" />
<line x1="96" y1="266.5" x2="117" y2="266.5" stroke="#000" stroke-width="1" />
<line x1="96" y1="251.5" x2="117" y2="251.5" stroke="#000" stroke-width="1" />
<line x1="96" y1="235.5" x2="117" y2="235.5" stroke="#000" stroke-width="1" />
<line x1="96" y1="220.5" x2="117" y2="220.5" stroke="#000" stroke-width="1" />
<line x1="96" y1="204.5" x2="117" y2="204.5" stroke="#000" stroke-width="1" />
<text x="91" y="318.3" font-family="Liberation Serif" font-size="11.5" font-weight="normal" text-anchor="end" >0</text>
<text x="91" y="302.8" font-family="Liberation Serif" font-size="11.5" font-weight="normal" text-anchor="end" >20</text>
<text x="91" y="287.3" font-family="Liberation Serif" font-size="11.5" font-weight="normal" text-anchor="end" >40</text>
<text x="91" y="271.8" font-family="Liberation Serif" font-size="11.5" font-weight="normal" text-anchor="end" >60</text>
<text x="91" y="256.3" font-family="Liberation Serif" font-size="11.5" font-weight="normal" text-anchor="end" >80</text>
<text x="91" y="240.8" font-family="Liberation Serif" font-size="11.5" font-weight="normal" text-anchor="end" >100</text>
<text x="91" y="225.3" font-family="Liberation Serif" font-size="11.5" font-weight="normal" text-anchor="end" >120</text>
<text x="91" y="209.8" font-family="Liberation Serif" font-size="11.5" font-weight="normal" text-anchor="end" >140</text>
<text x="91" y="194.3" font-family="Liberation Serif" font-size="11.5" font-weight="normal" text-anchor="end" >160</text>
<line x1="179.5" y1="309" x2="179.5" y2="313" stroke="#000" stroke-width="1" />
<line x1="264.5" y1="309" x2="264.5" y2="313" stroke="#000" stroke-width="1" />
<line x1="348.5" y1="309" x2="348.5" y2="313" stroke="#000" stroke-width="1" />
<line x1="433.5" y1="309" x2="433.5" y2="313" stroke="#000" stroke-width="1" />
<line x1="517.5" y1="309" x2="517.5" y2="313" stroke="#000" stroke-width="1" />
<line x1="602.5" y1="309" x2="602.5" y2="313" stroke="#000" stroke-width="1" />
<line x1="686.5" y1="309" x2="686.5" y2="313" stroke="#000" stroke-width="1" />
<line x1="771.5" y1="309" x2="771.5" y2="313" stroke="#000" stroke-width="1" />
<text x="96.0" y="322.7" font-family="Liberation Serif" font-size="11.5" font-weight="normal" text-anchor="middle" >0</text>
<text x="180.495" y="322.7" font-family="Liberation Serif" font-size="11.5" font-weight="normal" text-anchor="middle" >50</text>
<text x="264.99" y="322.7" font-family="Liberation Serif" font-size="11.5" font-weight="normal" text-anchor="middle" >100</text>
<text x="349.485" y="322.7" font-family="Liberation Serif" font-size="11.5" font-weight="normal" text-anchor="middle" >150</text>
<text x="433.98" y="322.7" font-family="Liberation Serif" font-size="11.5" font-weight="normal" text-anchor="middle" >200</text>
<text x="518.4749999999999" y="322.7" font-family="Liberation Serif" font-size="11.5" font-weight="normal" text-anchor="middle" >250</text>
<text x="602.97" y="322.7" font-family="Liberation Serif" font-size="11.5" font-weight="normal" text-anchor="middle" >300</text>
<text x="687.465" y="322.7" font-family="Liberation Serif" font-size="11.5" font-weight="normal" text-anchor="middle" >350</text>
<text x="771.96" y="322.7" font-family="Liberation Serif" font-size="11.5" font-weight="normal" text-anchor="middle" >400</text>
<text x="95.5" y="185.6" font-family="Liberation Serif" font-size="14" font-weight="normal" text-anchor="start" >Bump bonding map</text>
<rect x="802" y="306" width="40" height="7" fill="#6300FF"/>
<rect x="802" y="300" width="40" height="6" fill="#3300FF"/>
<rect x="802" y="294" width="40" height="6" fill="#0014FF"/>
<rect x="802" y="288" width="40" height="6" fill="#0044FF"/>
<rect x="802" y="282" width="40" height="6" fill="#008BFF"/>
<rect x="802" y="276" width="40" height="6" fill="#00BBFF"/>
<rect x="802" y="269" width="40" height="7" fill="#00FFFC"/>
<rect x="802" y="263" width="40" height="6" fill="#00FFCC"/>
<rect x="802" y="257" width="40" height="6" fill="#00FF85"/>
<rect x="802" y="250" width="40" height="7" fill="#00FF55"/>
<rect x="802" y="244" width="40" height="6" fill="#00FF0E"/>
<rect x="802" y="238" width="40" height="6" fill="#22FF00"/>
<rect x="802" y="232" width="40" height="6" fill="#69FF00"/>
<rect x="802" y="226" width="40" height="6" fill="#99FF00"/>
<rect x="802" y="220" width="40" height="6" fill="#E0FF00"/>
<rect x="802" y="214" width="40" height="6" fill="#FFEE00"/>
<rect x="802" y="208" width="40" height="6" fill="#FFA700"/>
<rect x="802" y="201" width="40" height="7" fill="#FF7700"/>
<rect x="802" y="195" width="40" height="6" fill="#FF3000"/>
<rect x="802" y="189" width="40" height="6" fill="#FF0000"/>
<line x1="842.5" y1="189" x2="842.5" y2="313.5" stroke="#000" stroke-width="1" />
<line x1="821" y1="189.5" x2="842" y2="189.5" stroke="#000" stroke-width="1" />
<text x="846" y="190.6" font-family="Liberation Sans" font-size="6" font-weight="bold" text-anchor="start" >2</text>
<line x1="821" y1="204.5" x2="842" y2="204.5" stroke="#000" stroke-width="1" />
<text x="846" y="206.1" font-family="Liberation Sans" font-size="6" font-weight="bold" text-anchor="start" >1.5</text>
<line x1="821" y1="220.5" x2="842" y2="220.5" stroke="#000" stroke-width="1" />
<text x="846" y="221.6" font-family="Liberation Sans" font-size="6" font-weight="bold" text-anchor="start" >1</text>
<line x1="821" y1="235.5" x2="842" y2="235.5" stroke="#000" stroke-width="1" />
<text x="846" y="237.1" font-family="Liberation Sans" font-size="6" font-weight="bold" text-anchor="start" >0.5</text>
<line x1="821" y1="251.5" x2="842" y2="251.5" stroke="#000" stroke-width="1" />
<text x="846" y="252.6" font-family="Liberation Sans" font-size="6" font-weight="bold" text-anchor="start" >0</text>
<line x1="821" y1="266.5" x2="842" y2="266.5" stroke="#000" stroke-width="1" />
<text x="846" y="268.1" font-family="Liberation Sans" font-size="6" font-weight="bold" text-anchor="start" >-0.5</text>
<line x1="821" y1="282.5" x2="842" y2="282.5" stroke="#000" stroke-width="1" />
<text x="846" y="283.6" font-family="Liberation Sans" font-size="6" font-weight="bold" text-anchor="start" >-1</text>
<line x1="821" y1="297.5" x2="842" y2="297.5" stroke="#000" stroke-width="1" />
<text x="846" y="299.1" font-family="Liberation Sans" font-size="6" font-weight="bold" text-anchor="start" >-1.5</text>
<line x1="821" y1="313.5" x2="842" y2="313.5" stroke="#000" stroke-width="1" />
<text x="846" y="314.6" font-family="Liberation Sans" font-size="6" font-weight="bold" text-anchor="start" >-2</text>
<rect x="251" y="288" width="1" height="1" fill="#00FF0E"/>
<rect x="96" y="248" width="1" height="1" fill="#00FF0E"/>
<rect x="96" y="250" width="1" height="1" fill="#00FF0E"/>
<rect x="462" y="311" width="1" height="1" fill="#00FF0E"/>
<rect x="463" y="311" width="2" height="1" fill="#6300FF"/>
<rect x="720" y="210" width="2" height="1" fill="#00FF0E"/>
<path d="M72.5 359.5H289.5V465.5H72.5Z" fill="none" stroke="#000" stroke-width="1"/>
<line x1="73" y1="464.5" x2="75" y2="464.5" stroke="#000" stroke-width="1" />
<line x1="73" y1="463.5" x2="75" y2="463.5" stroke="#000" stroke-width="1" />
<line x1="73" y1="462.5" x2="75" y2="462.5" stroke="#000" stroke-width="1" />
<line x1="73" y1="461.5" x2="78" y2="461.5" stroke="#000" stroke-width="1" />
<line x1="73" y1="454.5" x2="75" y2="454.5" stroke="#000" stroke-width="1" />
<line x1="73" y1="451.5" x2="75" y2="451.5" stroke="#000" stroke-width="1" />
<line x1="73" y1="448.5" x2="75" y2="448.5" stroke="#000" stroke-width="1" />
<line x1="73" y1="446.5" x2="75" y2="446.5" stroke="#000" stroke-width="1" />
<line x1="73" y1="445.5" x2="75" y2="445.5" stroke="#000" stroke-width="1" />
<line x1="73" y1="443.5" x2="75" y2="443.5" stroke="#000" stroke-width="1" />
<line x1="73" y1="442.5" x2="75" y2="442.5" stroke="#000" stroke-width="1" />
<line x1="73" y1="441.5" x2="75" y2="441.5" stroke="#000" stroke-width="1" />
<line x1="73" y1="440.5" x2="78" y2="440.5" stroke="#000" stroke-width="1" />
<line x1="73" y1="434.5" x2="75" y2="434.5" stroke="#000" stroke-width="1" />
<line x1="73" y1="430.5" x2="75" y2="430.5" stroke="#000" stroke-width="1" />
<line x1="73" y1="428.5" x2="75" y2="428.5" stroke="#000" stroke-width="1" />
<line x1="73" y1="426.5" x2="75" y2="426.5" stroke="#000" stroke-width="1" />
<line x1="73" y1="424.5" x2="75" y2="424.5" stroke="#000" stroke-width="1" />
<line x1="73" y1="423.5" x2="75" y2="423.5" stroke="#000" stroke-width="1" />
<line x1="73" y1="422.5" x2="75" y2="422.5" stroke="#000" stroke-width="1" />
<line x1="73" y1="421.5" x2="75" y2="421.5" stroke="#000" stroke-width="1" />
<line x1="73" y1="420.5" x2="78" y2="420.5" stroke="#000" stroke-width="1" />
<line x1="73" y1="414.5" x2="75" y2="414.5" stroke="#000" stroke-width="1" />
<line x1="73" y1="410.5" x2="75" y2="410.5" stroke="#000" stroke-width="1" />
<line x1="73" y1="408.5" x2="75" y2="408.5" stroke="#000" stroke-width="1" />
<line x1="73" y1="406.5" x2="75" y2="406.5" stroke="#000" stroke-width="1" />
<line x1="73" y1="404.5" x2="75" y2="404.5" stroke="#000" stroke-width="1" />
<line x1="73" y1="403.5" x2="75" y2="403.5" stroke="#000" stroke-width="1" />
<line x1="73" y1="401.5" x2="75" y2="401.5" stroke="#000" stroke-width="1" />
<line x1="73" y1="400.5" x2="75" y2="400.5" stroke="#000" stroke-width="1" />
<line x1="73" y1="399.5" x2="78" y2="399.5" stroke="#000" stroke-width="1" />
<line x1="73" y1="393.5" x2="75" y2="393.5" stroke="#000" stroke-width="1" />
<line x1="73" y1="390.5" x2="75" y2="390.5" stroke="#000" stroke-width="1" />
<line x1="73" y1="387.5" x2="75" y2="387.5" stroke="#000" stroke-width="1" />
<line x1="73" y1="385.5" x2="75" y2="385.5" stroke="#000" stroke-width="1" />
<line x1="73" y1="384.5" x2="75" y2="384.5" stroke="#000" stroke-width="1" />
<line x1="73" y1="382.5" x2="75" y2="382.5" stroke="#000" stroke-width="1" />
<line x1="73" y1="381.5" x2="75" y2="381.5" stroke="#000" stroke-width="1" />
<line x1="73" y1="380.5" x2="75" y2="380.5" stroke="#000" stroke-width="1" />
<line x1="73" y1="379.5" x2="78" y2="379.5" stroke="#000" stroke-width="1" />
<line x1="73" y1="373.5" x2="75" y2="373.5" stroke="#000" stroke-width="1" />
<line x1="73" y1="369.5" x2="75" y2="369.5" stroke="#000" stroke-width="1" />
<line x1="73" y1="367.5" x2="75" y2="367.5" stroke="#000" stroke-width="1" />
<line x1="73" y1="365.5" x2="75" y2="365.5" stroke="#000" stroke-width="1" />
<line x1="73" y1="363.5" x2="75" y2="363.5" stroke="#000" stroke-width="1" />
<line x1="73" y1="362.5" x2="75" y2="362.5" stroke="#000" stroke-width="1" />
<line x1="73" y1="361.5" x2="75" y2="361.5" stroke="#000" stroke-width="1" />
<line x1="73" y1="360.5" x2="75" y2="360.5" stroke="#000" stroke-width="1" />
<line x1="73" y1="359.5" x2="78" y2="359.5" stroke="#000" stroke-width="1" />
<text x="68" y="382" font-family="Liberation Serif" font-size="10.5" font-weight="normal" text-anchor="end" >10</text>
<text x="68" y="402.5" font-family="Liberation Serif" font-size="10.5" font-weight="normal" text-anchor="end" >1</text>
<text x="67.5" y="425.5" font-family="Liberation Serif" font-size="10.5" text-anchor="end">10<tspan font-size="8" dy="-4.6">-1</tspan></text>
<text x="67.5" y="446" font-family="Liberation Serif" font-size="10.5" text-anchor="end">10<tspan font-size="8" dy="-4.6">-2</tspan></text>
<text x="67.5" y="466.5" font-family="Liberation Serif" font-size="10.5" text-anchor="end">10<tspan font-size="8" dy="-4.6">-3</tspan></text>
<line x1="110.5" y1="461" x2="110.5" y2="465" stroke="#000" stroke-width="1" />
<line x1="148.5" y1="461" x2="148.5" y2="465" stroke="#000" stroke-width="1" />
<line x1="187.5" y1="461" x2="187.5" y2="465" stroke="#000" stroke-width="1" />
<line x1="225.5" y1="461" x2="225.5" y2="465" stroke="#000" stroke-width="1" />
<line x1="263.5" y1="461" x2="263.5" y2="465" stroke="#000" stroke-width="1" />
<text x="71.0" y="474" font-family="Liberation Serif" font-size="10" font-weight="normal" text-anchor="middle" >0</text>
<text x="109.2" y="474" font-family="Liberation Serif" font-size="10" font-weight="normal" text-anchor="middle" >100</text>
<text x="147.4" y="474" font-family="Liberation Serif" font-size="10" font-weight="normal" text-anchor="middle" >200</text>
<text x="185.60000000000002" y="474" font-family="Liberation Serif" font-size="10" font-weight="normal" text-anchor="middle" >300</text>
<text x="223.8" y="474" font-family="Liberation Serif" font-size="10" font-weight="normal" text-anchor="middle" >400</text>
<text x="262.0" y="474" font-family="Liberation Serif" font-size="10" font-weight="normal" text-anchor="middle" >500</text>
<text x="289.5" y="485.7" font-family="Liberation Serif" font-size="11" font-weight="normal" text-anchor="end" >Voltage [V]</text>
<text transform="translate(32.2,410) rotate(-90)" font-family="Liberation Sans" font-size="11" font-weight="bold" text-anchor="middle">Current [&#956;A]</text>
<text x="71" y="355" font-family="Liberation Serif" font-size="14" font-weight="normal" text-anchor="start" >I-V-Curve</text>
<text x="85.5" y="375.6" font-family="Liberation Serif" font-size="13" font-weight="normal" text-anchor="start" >I(150 V) = 0.01 &#956;A</text>
<text x="85.5" y="395.6" font-family="Liberation Serif" font-size="13" xml:space="preserve">I<tspan font-size="8" dy="3.4">150</tspan><tspan dy="-3.4">/I</tspan><tspan font-size="8" dy="3.4">100</tspan><tspan dy="-3.4"> =  1.25</tspan></text>
<polyline fill="none" stroke="#0000FF" stroke-width="2" points="72.5,463.1 74.6,453.75 76.5,450.6 82.75,446.25 92.75,442.5 97.75,440.6 114,439.4 129,437.5 151.5,435 176,431.7 196.1,428.4 216.2,423.7 221.5,420.3 224.9,415.6 227.6,403.6 232.3,399.6 233.6,394.2 244.3,381.5 251,377.5 260.4,366.7 268.4,359.6"/>
<text x="312.5" y="355" font-family="Liberation Serif" font-size="13" font-weight="bold" text-anchor="start" >Test Summary of M0143</text>
<text x="465.5" y="355" font-family="Liberation Serif" font-size="13" font-weight="bold" text-anchor="start" >T-10b</text>
<text x="767" y="355" font-family="Liberation Serif" font-size="13" font-weight="bold" text-anchor="start" xml:space="preserve">GRADE:  A</text>
<text x="312.3" y="379" font-family="Liberation Serif" font-size="13" font-weight="normal" text-anchor="start" >ROCs &gt; 1% defects:</text>
<text x="447" y="379" font-family="Liberation Serif" font-size="13" font-weight="normal" text-anchor="start" >0</text>
<text x="507.8" y="379" font-family="Liberation Serif" font-size="13" font-weight="normal" text-anchor="start" >Tested on:</text>
<text x="603.8" y="379" font-family="Liberation Serif" font-size="13" font-weight="normal" text-anchor="start" >Jan 9</text>
<text x="670" y="379" font-family="Liberation Serif" font-size="13" font-weight="normal" text-anchor="start" >Noise [e]</text>
<text x="800.6" y="379" font-family="Liberation Serif" font-size="13" font-weight="normal" text-anchor="start" >155.8</text>
<text x="312.3" y="396" font-family="Liberation Serif" font-size="13" font-weight="normal" text-anchor="start" >Dead Pixel:</text>
<text x="447" y="396" font-family="Liberation Serif" font-size="13" font-weight="normal" text-anchor="start" >0</text>
<text x="507.8" y="396" font-family="Liberation Serif" font-size="13" font-weight="normal" text-anchor="start" >Temp. [<tspan font-size="8" dy="-5">o</tspan><tspan dy="5">C]:</tspan></text>
<text x="603.8" y="396" font-family="Liberation Serif" font-size="13" font-weight="normal" text-anchor="start" >-10.0 +- 0.0</text>
<text x="670" y="396" font-family="Liberation Serif" font-size="13" font-weight="normal" text-anchor="start" >Vcal Thr. Width [e]</text>
<text x="800.6" y="396" font-family="Liberation Serif" font-size="13" font-weight="normal" text-anchor="start" >86.0</text>
<text x="312.3" y="412.9" font-family="Liberation Serif" font-size="13" font-weight="normal" text-anchor="start" >Mask Defects:</text>
<text x="447" y="412.9" font-family="Liberation Serif" font-size="13" font-weight="normal" text-anchor="start" >0</text>
<text x="507.8" y="412.9" font-family="Liberation Serif" font-size="13" font-weight="normal" text-anchor="start" >Trim / phCal:</text>
<text x="603.8" y="412.9" font-family="Liberation Serif" font-size="13" font-weight="normal" text-anchor="start" >yes / yes</text>
<text x="670" y="412.9" font-family="Liberation Serif" font-size="13" font-weight="normal" text-anchor="start" >Rel. Gain Width [%]</text>
<text x="800.6" y="412.9" font-family="Liberation Serif" font-size="13" font-weight="normal" text-anchor="start" >3.1</text>
<text x="312.3" y="429.8" font-family="Liberation Serif" font-size="13" font-weight="normal" text-anchor="start" >Dead Bumps:</text>
<text x="447" y="429.8" font-family="Liberation Serif" font-size="13" font-weight="normal" text-anchor="start" >6</text>
<text x="507.8" y="429.8" font-family="Liberation Serif" font-size="13" font-weight="normal" text-anchor="start" >Therm. cycl.:</text>
<text x="603.8" y="429.8" font-family="Liberation Serif" font-size="13" font-weight="normal" text-anchor="start" >yes</text>
<text x="670" y="429.8" font-family="Liberation Serif" font-size="13" font-weight="normal" text-anchor="start" >Pedestal Spread [e]</text>
<text x="800.6" y="429.8" font-family="Liberation Serif" font-size="13" font-weight="normal" text-anchor="start" >1490.5</text>
<text x="312.3" y="446.7" font-family="Liberation Serif" font-size="13" font-weight="normal" text-anchor="start" >Dead Trimbits:</text>
<text x="447" y="446.7" font-family="Liberation Serif" font-size="13" font-weight="normal" text-anchor="start" >0</text>
<text x="507.8" y="446.7" font-family="Liberation Serif" font-size="13" font-weight="normal" text-anchor="start" >TBM1:</text>
<text x="603.8" y="446.7" font-family="Liberation Serif" font-size="13" font-weight="normal" text-anchor="start" >ok</text>
<text x="670" y="446.7" font-family="Liberation Serif" font-size="13" font-weight="normal" text-anchor="start" >I(150 V) [T = 17 <tspan font-size="8" dy="-5">o</tspan><tspan dy="5">C]</tspan></text>
<text x="800.6" y="446.7" font-family="Liberation Serif" font-size="13" font-weight="normal" text-anchor="start" >0.17 &#956;A</text>
<text x="312.3" y="463.6" font-family="Liberation Serif" font-size="13" font-weight="normal" text-anchor="start" >Address Probl:</text>
<text x="447" y="463.6" font-family="Liberation Serif" font-size="13" font-weight="normal" text-anchor="start" >0</text>
<text x="507.8" y="463.6" font-family="Liberation Serif" font-size="13" font-weight="normal" text-anchor="start" >TBM2:</text>
<text x="603.8" y="463.6" font-family="Liberation Serif" font-size="13" font-weight="normal" text-anchor="start" >ok</text>
<text x="670" y="463.6" font-family="Liberation Serif" font-size="13" font-weight="normal" text-anchor="start" ><tspan dy="-2.4">I</tspan><tspan font-size="8" dy="3.6">150</tspan><tspan dy="-3.6">/I</tspan><tspan font-size="8" dy="3.6">100</tspan><tspan dy="-3.6" x="717">[T = 17 </tspan><tspan font-size="8" dy="-5">o</tspan><tspan dy="5">C]</tspan></text>
<text x="800.6" y="461.20000000000005" font-family="Liberation Serif" font-size="13" font-weight="normal" text-anchor="start" >1.25</text>
<path d="M47.5 527.5H198.5V648.5H47.5Z" fill="none" stroke="#000" stroke-width="1"/>
<text x="45.2" y="651.5" font-family="Liberation Serif" font-size="11" font-weight="normal" text-anchor="end" >0</text>
<line x1="48" y1="628.5" x2="52" y2="628.5" stroke="#000" stroke-width="1" />
<text x="45.2" y="631.25" font-family="Liberation Serif" font-size="11" font-weight="normal" text-anchor="end" >100</text>
<line x1="48" y1="608.5" x2="52" y2="608.5" stroke="#000" stroke-width="1" />
<text x="45.2" y="611.0" font-family="Liberation Serif" font-size="11" font-weight="normal" text-anchor="end" >200</text>
<line x1="48" y1="587.5" x2="52" y2="587.5" stroke="#000" stroke-width="1" />
<text x="45.2" y="590.75" font-family="Liberation Serif" font-size="11" font-weight="normal" text-anchor="end" >300</text>
<line x1="48" y1="567.5" x2="52" y2="567.5" stroke="#000" stroke-width="1" />
<text x="45.2" y="570.5" font-family="Liberation Serif" font-size="11" font-weight="normal" text-anchor="end" >400</text>
<line x1="48" y1="547.5" x2="52" y2="547.5" stroke="#000" stroke-width="1" />
<text x="45.2" y="550.25" font-family="Liberation Serif" font-size="11" font-weight="normal" text-anchor="end" >500</text>
<text x="45.2" y="530.0" font-family="Liberation Serif" font-size="11" font-weight="normal" text-anchor="end" >600</text>
<line x1="66.5" y1="644" x2="66.5" y2="648" stroke="#000" stroke-width="1" />
<line x1="85.5" y1="644" x2="85.5" y2="648" stroke="#000" stroke-width="1" />
<line x1="104.5" y1="644" x2="104.5" y2="648" stroke="#000" stroke-width="1" />
<line x1="123.5" y1="644" x2="123.5" y2="648" stroke="#000" stroke-width="1" />
<line x1="141.5" y1="644" x2="141.5" y2="648" stroke="#000" stroke-width="1" />
<line x1="160.5" y1="644" x2="160.5" y2="648" stroke="#000" stroke-width="1" />
<line x1="179.5" y1="644" x2="179.5" y2="648" stroke="#000" stroke-width="1" />
<text x="46.3" y="658" font-family="Liberation Serif" font-size="11" font-weight="normal" text-anchor="middle" >0</text>
<text x="65.175" y="658" font-family="Liberation Serif" font-size="11" font-weight="normal" text-anchor="middle" >2</text>
<text x="84.05" y="658" font-family="Liberation Serif" font-size="11" font-weight="normal" text-anchor="middle" >4</text>
<text x="102.925" y="658" font-family="Liberation Serif" font-size="11" font-weight="normal" text-anchor="middle" >6</text>
<text x="121.8" y="658" font-family="Liberation Serif" font-size="11" font-weight="normal" text-anchor="middle" >8</text>
<text x="140.675" y="658" font-family="Liberation Serif" font-size="11" font-weight="normal" text-anchor="middle" >10</text>
<text x="159.55" y="658" font-family="Liberation Serif" font-size="11" font-weight="normal" text-anchor="middle" >12</text>
<text x="178.425" y="658" font-family="Liberation Serif" font-size="11" font-weight="normal" text-anchor="middle" >14</text>
<text x="197.3" y="658" font-family="Liberation Serif" font-size="11" font-weight="normal" text-anchor="middle" >16</text>
<text x="56.6" y="520.7" font-family="Liberation Serif" font-size="13.15" font-weight="normal" text-anchor="start" >Noise</text>
<line x1="47" y1="547.5" x2="198" y2="547.5" stroke="#FF0000" stroke-width="1" stroke-dasharray="3,3"/>
<polyline fill="none" stroke="#0000FF" stroke-width="1.1" points="47.5,616.7 52.2,616.7 61.7,614.7 71.1,616.5 80.5,615.5 90.0,616.7 99.4,617.7 108.8,617.7 118.3,618.5 127.7,617.7 137.2,616.7 146.6,617.9 156.0,617.9 165.5,617.9 174.9,616.7 184.3,616.7 193.8,616.7 198.0,616.7"/>
<line x1="52.21875" y1="611.9075" x2="52.21875" y2="621.5074999999999" stroke="#0000FF" stroke-width="1.2" />
<circle cx="52.2" cy="616.7" r="2.4" fill="#fff" stroke="#0000FF" stroke-width="1.1"/>
<line x1="61.65625" y1="609.8825" x2="61.65625" y2="619.4825" stroke="#0000FF" stroke-width="1.2" />
<circle cx="61.7" cy="614.7" r="2.4" fill="#fff" stroke="#0000FF" stroke-width="1.1"/>
<line x1="71.09375" y1="611.705" x2="71.09375" y2="621.305" stroke="#0000FF" stroke-width="1.2" />
<circle cx="71.1" cy="616.5" r="2.4" fill="#fff" stroke="#0000FF" stroke-width="1.1"/>
<line x1="80.53125" y1="610.6925" x2="80.53125" y2="620.2924999999999" stroke="#0000FF" stroke-width="1.2" />
<circle cx="80.5" cy="615.5" r="2.4" fill="#fff" stroke="#0000FF" stroke-width="1.1"/>
<line x1="89.96875" y1="611.9075" x2="89.96875" y2="621.5074999999999" stroke="#0000FF" stroke-width="1.2" />
<circle cx="90.0" cy="616.7" r="2.4" fill="#fff" stroke="#0000FF" stroke-width="1.1"/>
<line x1="99.40625" y1="612.9200000000001" x2="99.40625" y2="622.52" stroke="#0000FF" stroke-width="1.2" />
<circle cx="99.4" cy="617.7" r="2.4" fill="#fff" stroke="#0000FF" stroke-width="1.1"/>
<line x1="108.84375" y1="612.9200000000001" x2="108.84375" y2="622.52" stroke="#0000FF" stroke-width="1.2" />
<circle cx="108.8" cy="617.7" r="2.4" fill="#fff" stroke="#0000FF" stroke-width="1.1"/>
<line x1="118.28125" y1="613.73" x2="118.28125" y2="623.3299999999999" stroke="#0000FF" stroke-width="1.2" />
<circle cx="118.3" cy="618.5" r="2.4" fill="#fff" stroke="#0000FF" stroke-width="1.1"/>
<line x1="127.71875" y1="612.9200000000001" x2="127.71875" y2="622.52" stroke="#0000FF" stroke-width="1.2" />
<circle cx="127.7" cy="617.7" r="2.4" fill="#fff" stroke="#0000FF" stroke-width="1.1"/>
<line x1="137.15625" y1="611.9075" x2="137.15625" y2="621.5074999999999" stroke="#0000FF" stroke-width="1.2" />
<circle cx="137.2" cy="616.7" r="2.4" fill="#fff" stroke="#0000FF" stroke-width="1.1"/>
<line x1="146.59375" y1="613.1225000000001" x2="146.59375" y2="622.7225" stroke="#0000FF" stroke-width="1.2" />
<circle cx="146.6" cy="617.9" r="2.4" fill="#fff" stroke="#0000FF" stroke-width="1.1"/>
<line x1="156.03125" y1="613.1225000000001" x2="156.03125" y2="622.7225" stroke="#0000FF" stroke-width="1.2" />
<circle cx="156.0" cy="617.9" r="2.4" fill="#fff" stroke="#0000FF" stroke-width="1.1"/>
<line x1="165.46875" y1="613.1225000000001" x2="165.46875" y2="622.7225" stroke="#0000FF" stroke-width="1.2" />
<circle cx="165.5" cy="617.9" r="2.4" fill="#fff" stroke="#0000FF" stroke-width="1.1"/>
<line x1="174.90625" y1="611.9075" x2="174.90625" y2="621.5074999999999" stroke="#0000FF" stroke-width="1.2" />
<circle cx="174.9" cy="616.7" r="2.4" fill="#fff" stroke="#0000FF" stroke-width="1.1"/>
<line x1="184.34375" y1="611.9075" x2="184.34375" y2="621.5074999999999" stroke="#0000FF" stroke-width="1.2" />
<circle cx="184.3" cy="616.7" r="2.4" fill="#fff" stroke="#0000FF" stroke-width="1.1"/>
<line x1="193.78125" y1="611.9075" x2="193.78125" y2="621.5074999999999" stroke="#0000FF" stroke-width="1.2" />
<circle cx="193.8" cy="616.7" r="2.4" fill="#fff" stroke="#0000FF" stroke-width="1.1"/>
<path d="M267.5 527.5H418.5V648.5H267.5Z" fill="none" stroke="#000" stroke-width="1"/>
<text x="265.2" y="651.5" font-family="Liberation Serif" font-size="11" font-weight="normal" text-anchor="end" >0</text>
<line x1="268" y1="628.5" x2="272" y2="628.5" stroke="#000" stroke-width="1" />
<text x="265.2" y="631.25" font-family="Liberation Serif" font-size="11" font-weight="normal" text-anchor="end" >50</text>
<line x1="268" y1="608.5" x2="272" y2="608.5" stroke="#000" stroke-width="1" />
<text x="265.2" y="611.0" font-family="Liberation Serif" font-size="11" font-weight="normal" text-anchor="end" >100</text>
<line x1="268" y1="587.5" x2="272" y2="587.5" stroke="#000" stroke-width="1" />
<text x="265.2" y="590.75" font-family="Liberation Serif" font-size="11" font-weight="normal" text-anchor="end" >150</text>
<line x1="268" y1="567.5" x2="272" y2="567.5" stroke="#000" stroke-width="1" />
<text x="265.2" y="570.5" font-family="Liberation Serif" font-size="11" font-weight="normal" text-anchor="end" >200</text>
<line x1="268" y1="547.5" x2="272" y2="547.5" stroke="#000" stroke-width="1" />
<text x="265.2" y="550.25" font-family="Liberation Serif" font-size="11" font-weight="normal" text-anchor="end" >250</text>
<text x="265.2" y="530.0" font-family="Liberation Serif" font-size="11" font-weight="normal" text-anchor="end" >300</text>
<line x1="286.5" y1="644" x2="286.5" y2="648" stroke="#000" stroke-width="1" />
<line x1="305.5" y1="644" x2="305.5" y2="648" stroke="#000" stroke-width="1" />
<line x1="324.5" y1="644" x2="324.5" y2="648" stroke="#000" stroke-width="1" />
<line x1="343.5" y1="644" x2="343.5" y2="648" stroke="#000" stroke-width="1" />
<line x1="361.5" y1="644" x2="361.5" y2="648" stroke="#000" stroke-width="1" />
<line x1="380.5" y1="644" x2="380.5" y2="648" stroke="#000" stroke-width="1" />
<line x1="399.5" y1="644" x2="399.5" y2="648" stroke="#000" stroke-width="1" />
<text x="266.3" y="658" font-family="Liberation Serif" font-size="11" font-weight="normal" text-anchor="middle" >0</text>
<text x="285.175" y="658" font-family="Liberation Serif" font-size="11" font-weight="normal" text-anchor="middle" >2</text>
<text x="304.05" y="658" font-family="Liberation Serif" font-size="11" font-weight="normal" text-anchor="middle" >4</text>
<text x="322.925" y="658" font-family="Liberation Serif" font-size="11" font-weight="normal" text-anchor="middle" >6</text>
<text x="341.8" y="658" font-family="Liberation Serif" font-size="11" font-weight="normal" text-anchor="middle" >8</text>
<text x="360.675" y="658" font-family="Liberation Serif" font-size="11" font-weight="normal" text-anchor="middle" >10</text>
<text x="379.55" y="658" font-family="Liberation Serif" font-size="11" font-weight="normal" text-anchor="middle" >12</text>
<text x="398.425" y="658" font-family="Liberation Serif" font-size="11" font-weight="normal" text-anchor="middle" >14</text>
<text x="417.3" y="658" font-family="Liberation Serif" font-size="11" font-weight="normal" text-anchor="middle" >16</text>
<text x="276.6" y="520.7" font-family="Liberation Serif" font-size="13.15" font-weight="normal" text-anchor="start" >Vcal Thr. Width</text>
<line x1="267" y1="567.5" x2="418" y2="567.5" stroke="#FF0000" stroke-width="1" stroke-dasharray="3,3"/>
<polyline fill="none" stroke="#59D454" stroke-width="1" points="272.2,614.1 281.7,611.0 291.1,612.0 300.5,613.3 310.0,613.3 319.4,614.1 328.8,613.3 338.3,613.3 347.7,613.3 357.2,613.3 366.6,613.3 376.0,616.1 385.5,612.0 394.9,612.0 404.3,613.3 413.8,613.3"/>
<rect x="270.5" y="612.5" width="4" height="4" fill="#fff" stroke="#59D454" stroke-width="1"/>
<rect x="279.5" y="609.5" width="4" height="4" fill="#fff" stroke="#59D454" stroke-width="1"/>
<rect x="289.5" y="610.5" width="4" height="4" fill="#fff" stroke="#59D454" stroke-width="1"/>
<rect x="298.5" y="611.5" width="4" height="4" fill="#fff" stroke="#59D454" stroke-width="1"/>
<rect x="307.5" y="611.5" width="4" height="4" fill="#fff" stroke="#59D454" stroke-width="1"/>
<rect x="317.5" y="612.5" width="4" height="4" fill="#fff" stroke="#59D454" stroke-width="1"/>
<rect x="326.5" y="611.5" width="4" height="4" fill="#fff" stroke="#59D454" stroke-width="1"/>
<rect x="336.5" y="611.5" width="4" height="4" fill="#fff" stroke="#59D454" stroke-width="1"/>
<rect x="345.5" y="611.5" width="4" height="4" fill="#fff" stroke="#59D454" stroke-width="1"/>
<rect x="355.5" y="611.5" width="4" height="4" fill="#fff" stroke="#59D454" stroke-width="1"/>
<rect x="364.5" y="611.5" width="4" height="4" fill="#fff" stroke="#59D454" stroke-width="1"/>
<rect x="374.5" y="614.5" width="4" height="4" fill="#fff" stroke="#59D454" stroke-width="1"/>
<rect x="383.5" y="610.5" width="4" height="4" fill="#fff" stroke="#59D454" stroke-width="1"/>
<rect x="392.5" y="610.5" width="4" height="4" fill="#fff" stroke="#59D454" stroke-width="1"/>
<rect x="402.5" y="611.5" width="4" height="4" fill="#fff" stroke="#59D454" stroke-width="1"/>
<rect x="411.5" y="611.5" width="4" height="4" fill="#fff" stroke="#59D454" stroke-width="1"/>
<path d="M486.5 527.5H637.5V648.5H486.5Z" fill="none" stroke="#000" stroke-width="1"/>
<text x="484.2" y="651.5" font-family="Liberation Serif" font-size="11" font-weight="normal" text-anchor="end" >0</text>
<line x1="487" y1="632.5" x2="491" y2="632.5" stroke="#000" stroke-width="1" />
<text x="484.2" y="635.3" font-family="Liberation Serif" font-size="11" font-weight="normal" text-anchor="end" >0.02</text>
<line x1="487" y1="616.5" x2="491" y2="616.5" stroke="#000" stroke-width="1" />
<text x="484.2" y="619.1" font-family="Liberation Serif" font-size="11" font-weight="normal" text-anchor="end" >0.04</text>
<line x1="487" y1="599.5" x2="491" y2="599.5" stroke="#000" stroke-width="1" />
<text x="484.2" y="602.9" font-family="Liberation Serif" font-size="11" font-weight="normal" text-anchor="end" >0.06</text>
<line x1="487" y1="583.5" x2="491" y2="583.5" stroke="#000" stroke-width="1" />
<text x="484.2" y="586.7" font-family="Liberation Serif" font-size="11" font-weight="normal" text-anchor="end" >0.08</text>
<line x1="487" y1="567.5" x2="491" y2="567.5" stroke="#000" stroke-width="1" />
<text x="484.2" y="570.5" font-family="Liberation Serif" font-size="11" font-weight="normal" text-anchor="end" >0.1</text>
<line x1="487" y1="551.5" x2="491" y2="551.5" stroke="#000" stroke-width="1" />
<text x="484.2" y="554.3" font-family="Liberation Serif" font-size="11" font-weight="normal" text-anchor="end" >0.12</text>
<line x1="487" y1="535.5" x2="491" y2="535.5" stroke="#000" stroke-width="1" />
<text x="484.2" y="538.1" font-family="Liberation Serif" font-size="11" font-weight="normal" text-anchor="end" >0.14</text>
<line x1="505.5" y1="644" x2="505.5" y2="648" stroke="#000" stroke-width="1" />
<line x1="524.5" y1="644" x2="524.5" y2="648" stroke="#000" stroke-width="1" />
<line x1="543.5" y1="644" x2="543.5" y2="648" stroke="#000" stroke-width="1" />
<line x1="562.5" y1="644" x2="562.5" y2="648" stroke="#000" stroke-width="1" />
<line x1="580.5" y1="644" x2="580.5" y2="648" stroke="#000" stroke-width="1" />
<line x1="599.5" y1="644" x2="599.5" y2="648" stroke="#000" stroke-width="1" />
<line x1="618.5" y1="644" x2="618.5" y2="648" stroke="#000" stroke-width="1" />
<text x="485.3" y="658" font-family="Liberation Serif" font-size="11" font-weight="normal" text-anchor="middle" >0</text>
<text x="504.175" y="658" font-family="Liberation Serif" font-size="11" font-weight="normal" text-anchor="middle" >2</text>
<text x="523.05" y="658" font-family="Liberation Serif" font-size="11" font-weight="normal" text-anchor="middle" >4</text>
<text x="541.925" y="658" font-family="Liberation Serif" font-size="11" font-weight="normal" text-anchor="middle" >6</text>
<text x="560.8" y="658" font-family="Liberation Serif" font-size="11" font-weight="normal" text-anchor="middle" >8</text>
<text x="579.675" y="658" font-family="Liberation Serif" font-size="11" font-weight="normal" text-anchor="middle" >10</text>
<text x="598.55" y="658" font-family="Liberation Serif" font-size="11" font-weight="normal" text-anchor="middle" >12</text>
<text x="617.425" y="658" font-family="Liberation Serif" font-size="11" font-weight="normal" text-anchor="middle" >14</text>
<text x="636.3" y="658" font-family="Liberation Serif" font-size="11" font-weight="normal" text-anchor="middle" >16</text>
<text x="495.6" y="520.7" font-family="Liberation Serif" font-size="13.15" font-weight="normal" text-anchor="start" >Rel. Gain Width</text>
<line x1="486" y1="567.5" x2="637" y2="567.5" stroke="#FF0000" stroke-width="1" stroke-dasharray="3,3"/>
<polyline fill="none" stroke="#FF00FF" stroke-width="1" points="491.2,626.8 500.7,616.5 510.1,625.5 519.5,627.8 529.0,616.5 538.4,625.5 547.8,624.5 557.3,619.9 566.7,626.5 576.2,630.0 585.6,621.5 595.0,626.5 604.5,622.7 613.9,619.9 623.3,616.5 632.8,623.6"/>
<path d="M491.2 624.2L493.8 628.8H488.6Z" fill="#fff" stroke="#FF00FF" stroke-width="1"/>
<path d="M500.7 613.9L503.3 618.5H498.1Z" fill="#fff" stroke="#FF00FF" stroke-width="1"/>
<path d="M510.1 622.9L512.7 627.5H507.5Z" fill="#fff" stroke="#FF00FF" stroke-width="1"/>
<path d="M519.5 625.2L522.1 629.8H516.9Z" fill="#fff" stroke="#FF00FF" stroke-width="1"/>
<path d="M529.0 613.9L531.6 618.5H526.4Z" fill="#fff" stroke="#FF00FF" stroke-width="1"/>
<path d="M538.4 622.9L541.0 627.5H535.8Z" fill="#fff" stroke="#FF00FF" stroke-width="1"/>
<path d="M547.8 621.9L550.4 626.5H545.2Z" fill="#fff" stroke="#FF00FF" stroke-width="1"/>
<path d="M557.3 617.3L559.9 621.9H554.7Z" fill="#fff" stroke="#FF00FF" stroke-width="1"/>
<path d="M566.7 623.9L569.3 628.5H564.1Z" fill="#fff" stroke="#FF00FF" stroke-width="1"/>
<path d="M576.2 627.4L578.8 632.0H573.6Z" fill="#fff" stroke="#FF00FF" stroke-width="1"/>
<path d="M585.6 618.9L588.2 623.5H583.0Z" fill="#fff" stroke="#FF00FF" stroke-width="1"/>
<path d="M595.0 623.9L597.6 628.5H592.4Z" fill="#fff" stroke="#FF00FF" stroke-width="1"/>
<path d="M604.5 620.1L607.1 624.7H601.9Z" fill="#fff" stroke="#FF00FF" stroke-width="1"/>
<path d="M613.9 617.3L616.5 621.9H611.3Z" fill="#fff" stroke="#FF00FF" stroke-width="1"/>
<path d="M623.3 613.9L625.9 618.5H620.7Z" fill="#fff" stroke="#FF00FF" stroke-width="1"/>
<path d="M632.8 621.0L635.4 625.6H630.2Z" fill="#fff" stroke="#FF00FF" stroke-width="1"/>
<path d="M706.5 527.5H857.5V648.5H706.5Z" fill="none" stroke="#000" stroke-width="1"/>
<text x="704.2" y="651.5" font-family="Liberation Serif" font-size="11" font-weight="normal" text-anchor="end" >0</text>
<line x1="707" y1="631.5" x2="711" y2="631.5" stroke="#000" stroke-width="1" />
<text x="704.2" y="634.1428571428571" font-family="Liberation Serif" font-size="11" font-weight="normal" text-anchor="end" >500</text>
<line x1="707" y1="613.5" x2="711" y2="613.5" stroke="#000" stroke-width="1" />
<text x="704.2" y="616.7857142857143" font-family="Liberation Serif" font-size="11" font-weight="normal" text-anchor="end" >1000</text>
<line x1="707" y1="596.5" x2="711" y2="596.5" stroke="#000" stroke-width="1" />
<text x="704.2" y="599.4285714285714" font-family="Liberation Serif" font-size="11" font-weight="normal" text-anchor="end" >1500</text>
<line x1="707" y1="579.5" x2="711" y2="579.5" stroke="#000" stroke-width="1" />
<text x="704.2" y="582.0714285714286" font-family="Liberation Serif" font-size="11" font-weight="normal" text-anchor="end" >2000</text>
<line x1="707" y1="561.5" x2="711" y2="561.5" stroke="#000" stroke-width="1" />
<text x="704.2" y="564.7142857142857" font-family="Liberation Serif" font-size="11" font-weight="normal" text-anchor="end" >2500</text>
<line x1="707" y1="544.5" x2="711" y2="544.5" stroke="#000" stroke-width="1" />
<text x="704.2" y="547.3571428571429" font-family="Liberation Serif" font-size="11" font-weight="normal" text-anchor="end" >3000</text>
<text x="704.2" y="530.0" font-family="Liberation Serif" font-size="11" font-weight="normal" text-anchor="end" >3500</text>
<line x1="725.5" y1="644" x2="725.5" y2="648" stroke="#000" stroke-width="1" />
<line x1="744.5" y1="644" x2="744.5" y2="648" stroke="#000" stroke-width="1" />
<line x1="763.5" y1="644" x2="763.5" y2="648" stroke="#000" stroke-width="1" />
<line x1="782.5" y1="644" x2="782.5" y2="648" stroke="#000" stroke-width="1" />
<line x1="800.5" y1="644" x2="800.5" y2="648" stroke="#000" stroke-width="1" />
<line x1="819.5" y1="644" x2="819.5" y2="648" stroke="#000" stroke-width="1" />
<line x1="838.5" y1="644" x2="838.5" y2="648" stroke="#000" stroke-width="1" />
<text x="705.3" y="658" font-family="Liberation Serif" font-size="11" font-weight="normal" text-anchor="middle" >0</text>
<text x="724.175" y="658" font-family="Liberation Serif" font-size="11" font-weight="normal" text-anchor="middle" >2</text>
<text x="743.05" y="658" font-family="Liberation Serif" font-size="11" font-weight="normal" text-anchor="middle" >4</text>
<text x="761.925" y="658" font-family="Liberation Serif" font-size="11" font-weight="normal" text-anchor="middle" >6</text>
<text x="780.8" y="658" font-family="Liberation Serif" font-size="11" font-weight="normal" text-anchor="middle" >8</text>
<text x="799.675" y="658" font-family="Liberation Serif" font-size="11" font-weight="normal" text-anchor="middle" >10</text>
<text x="818.55" y="658" font-family="Liberation Serif" font-size="11" font-weight="normal" text-anchor="middle" >12</text>
<text x="837.425" y="658" font-family="Liberation Serif" font-size="11" font-weight="normal" text-anchor="middle" >14</text>
<text x="856.3" y="658" font-family="Liberation Serif" font-size="11" font-weight="normal" text-anchor="middle" >16</text>
<text x="715.6" y="520.7" font-family="Liberation Serif" font-size="13.15" font-weight="normal" text-anchor="start" >Pedestal Spread</text>
<line x1="706" y1="561.5" x2="857" y2="561.5" stroke="#FF0000" stroke-width="1" stroke-dasharray="3,3"/>
<polyline fill="none" stroke="#000" stroke-width="1" points="706.5,595.0 711.2,598.0 720.7,608.8 730.1,593.0 739.5,600.0 749.0,585.0 758.4,596.3 767.8,612.3 777.3,588.7 786.7,587.0 796.2,604.8 805.6,590.8 815.0,590.0 824.5,590.0 833.9,590.0 843.3,608.8 852.8,590.3"/>
<path d="M708.6 595.8H713.8L711.2 600.2Z" fill="#000"/>
<path d="M718.1 606.6H723.3L720.7 611.0Z" fill="#000"/>
<path d="M727.5 590.8H732.7L730.1 595.2Z" fill="#000"/>
<path d="M736.9 597.8H742.1L739.5 602.2Z" fill="#000"/>
<path d="M746.4 582.8H751.6L749.0 587.2Z" fill="#000"/>
<path d="M755.8 594.1H761.0L758.4 598.5Z" fill="#000"/>
<path d="M765.2 610.1H770.4L767.8 614.5Z" fill="#000"/>
<path d="M774.7 586.5H779.9L777.3 590.9Z" fill="#000"/>
<path d="M784.1 584.8H789.3L786.7 589.2Z" fill="#000"/>
<path d="M793.6 602.6H798.8L796.2 607.0Z" fill="#000"/>
<path d="M803.0 588.6H808.2L805.6 593.0Z" fill="#000"/>
<path d="M812.4 587.8H817.6L815.0 592.2Z" fill="#000"/>
<path d="M821.9 587.8H827.1L824.5 592.2Z" fill="#000"/>
<path d="M831.3 587.8H836.5L833.9 592.2Z" fill="#000"/>
<path d="M840.7 606.6H845.9L843.3 611.0Z" fill="#000"/>
<path d="M850.2 588.1H855.4L852.8 592.5Z" fill="#000"/></svg>
</div>
<script>
var G={"T": [[[99, 99, 99, 104], [98, 98, 99, 105], [99, 99, 101, 106], [101, 101, 103, 106]], [[100, 100, 102, 104], [101, 102, 104, 106], [103, 104, 107, 110], [104, 106, 112, 115]], [[98, 96, 96, 99], [99, 97, 97, 100], [102, 101, 102, 104], [104, 103, 104, 106]], [[103.5, 103.5, 106.5, 107.5], [104.5, 105.5, 107.5, 108.5], [105.5, 106.5, 108.5, 109.5], [106.5, 107.5, 109.5, 111.5]], [[97, 97, 101, 103], [98, 98, 102, 104], [101, 101, 106, 107], [105, 106, 108, 109]], [[101, 101, 103, 106], [102, 103, 105, 107], [104, 105, 107, 108], [106, 107, 108, 110]], [[98, 98, 102, 103], [98, 98, 104, 105], [100, 100, 106, 107], [101, 102, 107, 108]], [[97, 96, 97, 102], [97, 97, 99, 104], [99, 99, 103, 106], [101, 102, 105, 108]]], "B": [[[114, 114, 108, 107], [112, 112, 106, 105], [110, 110, 105, 104], [108, 108, 104, 104]], [[106, 103, 101, 100], [105, 101, 96, 94], [104, 99, 94, 92], [104, 98, 93, 91]], [[101.5, 100.5, 99.5, 99.5], [99.5, 98.5, 97.5, 98.5], [98.5, 97.5, 96.5, 97.5], [98.5, 96.5, 96.5, 97.5]], [[107, 106, 99, 98], [107, 105, 97, 97], [106, 105, 97, 96], [106, 104, 97, 96]], [[110, 109, 108, 107], [108, 105, 104, 105], [107, 103, 101, 104], [106, 104, 102, 104]], [[107, 102, 97, 96], [106, 100, 95, 95], [105, 98, 94, 94], [104, 97, 93, 94]], [[104.5, 101.5, 98.5, 99.5], [102.5, 99.5, 97.5, 98.5], [101.5, 97.5, 95.5, 97.5], [101.5, 96.5, 95.5, 97.5]], [[101, 99, 98, 97], [100, 97, 95, 96], [99, 96, 93, 95], [98, 95, 92, 95]]]};
(function(){
var PAL=['#6300FF','#3300FF','#0014FF','#0044FF','#008BFF','#00BBFF','#00FFFC','#00FFCC','#00FF85','#00FF55','#00FF0E','#22FF00','#69FF00','#99FF00','#E0FF00','#FFEE00','#FFA700','#FF7700','#FF3000','#FF0000'];
var cv=document.getElementById('hm'); if(!cv||!cv.getContext) return;
var ctx=cv.getContext('2d');
var s=123456789;
function rnd(){ s^=s<<13; s^=s>>>17; s^=s<<5; return ((s>>>0)%1000000)/1000000; }
function gauss(){ var u=rnd()||1e-6, v=rnd(); return Math.sqrt(-2*Math.log(u))*Math.cos(6.2831853*v); }
// build value function: each ROC 52x80, grid 4x4 cells (13 cols x 20 rows)
function ctrl(half, roc, gi, gj){ // gi col 0..3, gj row 0..3 from top of the ROC
  return G[half][roc][gj][gi];
}
function meanAt(i, j){ // i bin col 0..415, j row 0..159 (0 bottom)
  var roc=Math.floor(i/52), li=i-roc*52;
  var top = j>=80; var half = top?'T':'B';
  var lj = top ? (159-j) : (79-j); // from top of ROC
  // continuous grid coordinate (cell centers at 6, 19.5, ...)
  var fx=(li+0.5)/13-0.5, fy=(lj+0.5)/20-0.5;
  var x0=Math.floor(fx), y0=Math.floor(fy); var tx=fx-x0, ty=fy-y0;
  function g(a,b){ a=Math.max(0,Math.min(3,a)); b=Math.max(0,Math.min(3,b)); return ctrl(half,roc,a,b); }
  var v=(g(x0,y0)*(1-tx)+g(x0+1,y0)*tx)*(1-ty)+(g(x0,y0+1)*(1-tx)+g(x0+1,y0+1)*tx)*ty;
  if(li==0||li==51) v+=7;
  if(roc==0&&li<13) v+= top?3:6;
  if(j==79||j==80) v+=7;
  return v;
}
var img=ctx.createImageData(416,161);
var rgb=PAL.map(function(c){return [parseInt(c.substr(1,2),16),parseInt(c.substr(3,2),16),parseInt(c.substr(5,2),16)];});
for(var j=0;j<160;j++){
  for(var i=0;i<416;i++){
    var v=meanAt(i,j)+1+gauss()*3.3;
    var k=Math.floor((v-80)/2.756); if(k<0)k=0; if(k>19)k=19;
    var p=((159-j)*416+i)*4; var c=rgb[k];
    img.data[p]=c[0]; img.data[p+1]=c[1]; img.data[p+2]=c[2]; img.data[p+3]=255;
  }
}
ctx.putImageData(img,0,0);
})();

</script>
</body></html>
